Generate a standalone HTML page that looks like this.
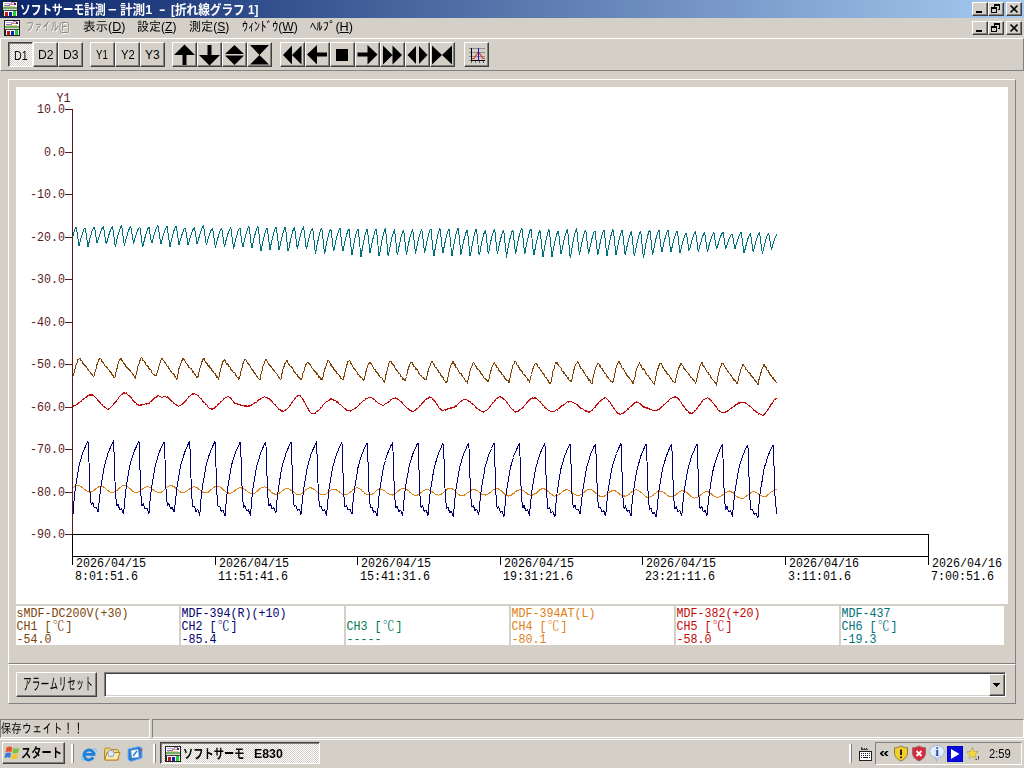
<!DOCTYPE html>
<html lang="ja"><head><meta charset="utf-8"><title>ソフトサーモ計測</title>
<style>
*{box-sizing:border-box;margin:0;padding:0}
html,body{width:1024px;height:768px;overflow:hidden;background:#d4d0c8}
body{position:relative;font-family:"Liberation Sans","IPAGothic","Noto Sans CJK JP",sans-serif;font-size:12px;color:#000;line-height:1}
.a{position:absolute}
.t{position:absolute;white-space:nowrap;transform-origin:0 0}
.title{left:0;top:0;width:1024px;height:18px;background:linear-gradient(to right,#0a246a,#a6caf0)}
.rb{border:1px solid;border-color:#fff #404040 #404040 #fff;box-shadow:inset -1px -1px 0 #808080,inset 1px 1px 0 #d4d0c8;background:#d4d0c8}
.sb{border:1px solid;border-color:#808080 #fff #fff #808080;box-shadow:inset 1px 1px 0 #404040,inset -1px -1px 0 #d4d0c8}
.r1{border:1px solid;border-color:#fff #808080 #808080 #fff}
.s1{border:1px solid;border-color:#808080 #fff #fff #808080}
.dith{background-color:#d4d0c8;background-image:linear-gradient(45deg,#fff 25%,transparent 25%,transparent 75%,#fff 75%),linear-gradient(45deg,#fff 25%,transparent 25%,transparent 75%,#fff 75%);background-size:2px 2px;background-position:0 0,1px 1px}
.pb{border:1px solid;border-color:#404040 #fff #fff #404040;box-shadow:inset 1px 1px 0 #808080}
.tb{width:25px;height:25px;top:42px}
.cap{width:16px;height:14px}
svg{position:absolute;left:0;top:0;overflow:visible}
</style></head>
<body>
<div class="a title"></div>
<svg class="a" style="left:2px;top:1px" width="16" height="16" viewBox="0 0 16 16" shape-rendering="crispEdges">
<rect x="0" y="0" width="16" height="16" fill="#222"/>
<rect x="1" y="1" width="14" height="6" fill="#fff"/>
<rect x="2" y="2" width="8" height="1" fill="#b8a8e0"/><rect x="9" y="1" width="4" height="1" fill="#9a80d0"/><rect x="12" y="2" width="2" height="2" fill="#502060"/>
<rect x="2" y="4" width="6" height="1" fill="#8070c8"/><rect x="7" y="3" width="5" height="1" fill="#e08080"/>
<rect x="2" y="5" width="11" height="1" fill="#d8c890"/>
<rect x="1" y="6" width="14" height="2" fill="#70b060"/>
<rect x="1" y="8" width="14" height="1" fill="#d8d8d8"/>
<rect x="1" y="9" width="14" height="1" fill="#444"/>
<rect x="2" y="10" width="13" height="5" fill="#fff"/>
<rect x="3" y="11" width="3" height="4" fill="#c01818"/>
<rect x="7" y="11" width="3" height="4" fill="#1020b0"/>
<rect x="11" y="10" width="3" height="5" fill="#20d030"/>
</svg>
<div class="t" id="t1" style="left:20.18px;top:3px;font-size:13px;font-weight:bold;font-family:'Liberation Sans','Noto Sans CJK JP',sans-serif;color:#fff;transform:scaleX(0.8235)">ソフトサーモ計測</div>
<div class="t" id="t2" style="left:108.00px;top:3px;font-size:13px;font-weight:bold;font-family:'Liberation Sans','Noto Sans CJK JP',sans-serif;color:#fff;transform:scaleX(1.1429)">−</div>
<div class="t" id="t3" style="left:120.00px;top:3px;font-size:13px;font-weight:bold;font-family:'Liberation Sans','Noto Sans CJK JP',sans-serif;color:#fff;transform:scaleX(0.9697)">計測1</div>
<div class="t" id="t4" style="left:159.00px;top:3px;font-size:13px;font-weight:bold;font-family:'Liberation Sans','Noto Sans CJK JP',sans-serif;color:#fff;transform:scaleX(1.5000)">-</div>
<div class="t" id="t5" style="left:171.10px;top:3px;font-size:13px;font-weight:bold;font-family:'Liberation Sans','Noto Sans CJK JP',sans-serif;color:#fff;transform:scaleX(0.8958)">[折れ線グラフ 1]</div>
<div class="a rb cap" style="left:972px;top:2px"><div class="a" style="left:3px;top:8px;width:6px;height:2px;background:#000"></div></div><div class="a rb cap" style="left:988px;top:2px"><svg width="14" height="12" viewBox="0 0 14 12" shape-rendering="crispEdges" style="left:0;top:0"><path d="M5 1h6v2h-6zM5 3h1v1h-1zM10 3h1v4h-1zM9 6h1v1h-1z" fill="#000"/><path d="M2 4h6v2h-6zM2 6h1v4h-1zM7 6h1v4h-1zM2 9h6v1h-6z" fill="#000"/></svg></div><div class="a rb cap" style="left:1006px;top:2px"><svg width="14" height="12" viewBox="0 0 14 12" style="left:0;top:0"><path d="M3.5 2.5l7 7M10.5 2.5l-7 7" stroke="#000" stroke-width="1.6" fill="none"/></svg></div>
<svg class="a" style="left:4px;top:20px" width="16" height="16" viewBox="0 0 16 16" shape-rendering="crispEdges">
<rect x="0" y="0" width="16" height="16" fill="#222"/>
<rect x="1" y="1" width="14" height="6" fill="#fff"/>
<rect x="2" y="2" width="8" height="1" fill="#b8a8e0"/><rect x="9" y="1" width="4" height="1" fill="#9a80d0"/><rect x="12" y="2" width="2" height="2" fill="#502060"/>
<rect x="2" y="4" width="6" height="1" fill="#8070c8"/><rect x="7" y="3" width="5" height="1" fill="#e08080"/>
<rect x="2" y="5" width="11" height="1" fill="#d8c890"/>
<rect x="1" y="6" width="14" height="2" fill="#70b060"/>
<rect x="1" y="8" width="14" height="1" fill="#d8d8d8"/>
<rect x="1" y="9" width="14" height="1" fill="#444"/>
<rect x="2" y="10" width="13" height="5" fill="#fff"/>
<rect x="3" y="11" width="3" height="4" fill="#c01818"/>
<rect x="7" y="11" width="3" height="4" fill="#1020b0"/>
<rect x="11" y="10" width="3" height="5" fill="#20d030"/>
</svg>
<div class="a rb cap" style="left:972px;top:21px"><div class="a" style="left:3px;top:8px;width:6px;height:2px;background:#000"></div></div><div class="a rb cap" style="left:988px;top:21px"><svg width="14" height="12" viewBox="0 0 14 12" shape-rendering="crispEdges" style="left:0;top:0"><path d="M5 1h6v2h-6zM5 3h1v1h-1zM10 3h1v4h-1zM9 6h1v1h-1z" fill="#000"/><path d="M2 4h6v2h-6zM2 6h1v4h-1zM7 6h1v4h-1zM2 9h6v1h-6z" fill="#000"/></svg></div><div class="a rb cap" style="left:1006px;top:21px"><svg width="14" height="12" viewBox="0 0 14 12" style="left:0;top:0"><path d="M3.5 2.5l7 7M10.5 2.5l-7 7" stroke="#000" stroke-width="1.6" fill="none"/></svg></div>
<div class="t" id="m0" style="left:25.73px;top:20px;font-size:13px;color:#808080;text-shadow:1px 1px 0 #fff;transform:scaleX(0.6364)">ファイル(<u>F</u>)</div>
<div class="t" id="m1" style="left:82.54px;top:20px;font-size:13px;color:#000;transform:scaleX(0.9643)">表示(<u>D</u>)</div>
<div class="t" id="m2" style="left:137.07px;top:20px;font-size:13px;color:#000;transform:scaleX(0.9268)">設定(<u>Z</u>)</div>
<div class="t" id="m3" style="left:189.07px;top:20px;font-size:13px;color:#000;transform:scaleX(0.9286)">測定(<u>S</u>)</div>
<div class="t" id="m4" style="left:242.07px;top:20px;font-size:13px;color:#000;transform:scaleX(0.9310)">ｳｨﾝﾄﾞｳ(<u>W</u>)</div>
<div class="t" id="m5" style="left:310.02px;top:20px;font-size:13px;color:#000;transform:scaleX(0.9762)">ﾍﾙﾌﾟ(<u>H</u>)</div>
<div class="a r1" style="left:0;top:38px;width:1024px;height:33px"></div>
<div class="a pb dith tb" style="left:8px"></div>
<div class="a rb tb" style="left:33px"></div>
<div class="a rb tb" style="left:58px"></div>
<div class="a rb tb" style="left:90px"></div>
<div class="a rb tb" style="left:115px"></div>
<div class="a rb tb" style="left:140px"></div>
<div class="t" id="d1" style="left:14.11px;top:50px;font-size:12px;color:#000;transform:scaleX(0.8929)">D1</div>
<div class="t" id="d2" style="left:37.99px;top:49px;font-size:12px;color:#000;transform:scaleX(1.0143)">D2</div>
<div class="t" id="d3" style="left:62.99px;top:49px;font-size:12px;color:#000;transform:scaleX(1.0143)">D3</div>
<div class="t" id="y1" style="left:96.00px;top:49px;font-size:12px;color:#000;transform:scaleX(0.8071)">Y1</div>
<div class="t" id="y2" style="left:120.70px;top:49px;font-size:12px;color:#000;transform:scaleX(0.9429)">Y2</div>
<div class="t" id="y3" style="left:145.00px;top:49px;font-size:12px;color:#000;transform:scaleX(1.0000)">Y3</div>
<div class="a rb tb" style="left:172px"><svg width="25" height="25" viewBox="0 0 25 25" style="left:-1px;top:-1px"><path d="M12.5 2.5L23 13H14.5V23H10.5V13H2Z" fill="#000"/></svg></div>
<div class="a rb tb" style="left:197px"><svg width="25" height="25" viewBox="0 0 25 25" style="left:-1px;top:-1px"><path d="M12.5 23.5L23 13H14.5V3H10.5V13H2Z" fill="#000"/></svg></div>
<div class="a rb tb" style="left:222px"><svg width="25" height="25" viewBox="0 0 25 25" style="left:-1px;top:-1px"><path d="M12.5 3L22 12H3ZM12.5 23L22 13.5H3Z" fill="#000"/></svg></div>
<div class="a rb tb" style="left:247px"><svg width="25" height="25" viewBox="0 0 25 25" style="left:-1px;top:-1px"><path d="M3 3H22L12.5 13ZM3 22.5H22L12.5 13Z" fill="#000"/></svg></div>
<div class="a rb tb" style="left:280px"><svg width="25" height="25" viewBox="0 0 25 25" style="left:-1px;top:-1px"><path d="M3 13L12 3.5V22.5ZM12 13L21.5 3.5V22.5Z" fill="#000"/></svg></div>
<div class="a rb tb" style="left:305px"><svg width="25" height="25" viewBox="0 0 25 25" style="left:-1px;top:-1px"><path d="M2 12.5L12 3V10.5H22V14.5H12V22.5Z" fill="#000"/></svg></div>
<div class="a rb tb" style="left:330px"><svg width="25" height="25" viewBox="0 0 25 25" style="left:-1px;top:-1px"><path d="M6 7H18V19H6Z" fill="#000"/></svg></div>
<div class="a rb tb" style="left:355px"><svg width="25" height="25" viewBox="0 0 25 25" style="left:-1px;top:-1px"><path d="M22.5 12.5L12.5 3V10.5H2.5V14.5H12.5V22.5Z" fill="#000"/></svg></div>
<div class="a rb tb" style="left:380px"><svg width="25" height="25" viewBox="0 0 25 25" style="left:-1px;top:-1px"><path d="M3 3.5L12.5 13L3 22.5ZM12.5 3.5L22 13L12.5 22.5Z" fill="#000"/></svg></div>
<div class="a rb tb" style="left:405px"><svg width="25" height="25" viewBox="0 0 25 25" style="left:-1px;top:-1px"><path d="M2.5 13L11 4V22ZM22.5 13L14 4V22Z" fill="#000"/></svg></div>
<div class="a rb tb" style="left:430px"><svg width="25" height="25" viewBox="0 0 25 25" style="left:-1px;top:-1px"><path d="M2 3.5L12 13L2 22.5ZM22 3.5L12 13L22 22.5Z" fill="#000"/></svg></div>
<div class="a rb tb" style="left:464px"><svg width="25" height="25" viewBox="0 0 25 25" style="left:-1px;top:-1px" shape-rendering="crispEdges">
<path d="M5 6.5h16M5 10.5h16M5 14.5h16M5 18.5h3" stroke="#909090" stroke-width="1" fill="none"/>
<path d="M7.5 6v13M7 18.5h14" stroke="#000" stroke-width="1" fill="none"/>
<path d="M7.5 19v2M11.5 19v2M15.5 19v2M19.5 19v2" stroke="#606060" stroke-width="1" fill="none"/>
<path d="M8 16.5h2l4 -6l1 0l4 6h2" stroke="#e03030" stroke-width="1.2" fill="none" shape-rendering="auto"/>
<path d="M14.5 6v13" stroke="#1818a0" stroke-width="1" fill="none"/>
</svg></div>
<div class="a r1" style="left:8px;top:79px;width:1008px;height:585px"></div>
<div class="a" style="left:16px;top:87px;width:992px;height:517px;background:#fff"></div>
<div class="a" style="left:16px;top:606px;width:163px;height:39px;background:#fff"></div>
<div class="a" style="left:181px;top:606px;width:163px;height:39px;background:#fff"></div>
<div class="a" style="left:346px;top:606px;width:163px;height:39px;background:#fff"></div>
<div class="a" style="left:511px;top:606px;width:163px;height:39px;background:#fff"></div>
<div class="a" style="left:676px;top:606px;width:163px;height:39px;background:#fff"></div>
<div class="a" style="left:841px;top:606px;width:163px;height:39px;background:#fff"></div>
<svg width="1024" height="768" viewBox="0 0 1024 768">
<g shape-rendering="crispEdges" fill="none">
<path d="M72.5 109V534" stroke="#5a1a1c"/>
<path d="M65 109.5H73" stroke="#5a1a1c"/>
<path d="M65 152.5H73" stroke="#5a1a1c"/>
<path d="M65 194.5H73" stroke="#5a1a1c"/>
<path d="M65 237.5H73" stroke="#5a1a1c"/>
<path d="M65 279.5H73" stroke="#5a1a1c"/>
<path d="M65 322.5H73" stroke="#5a1a1c"/>
<path d="M65 364.5H73" stroke="#5a1a1c"/>
<path d="M65 407.5H73" stroke="#5a1a1c"/>
<path d="M65 449.5H73" stroke="#5a1a1c"/>
<path d="M65 492.5H73" stroke="#5a1a1c"/>
<path d="M65 534.5H73" stroke="#5a1a1c"/>
<rect x="72.5" y="534.5" width="856" height="22" stroke="#000"/>
<path d="M72.5 557V565" stroke="#000"/>
<path d="M215.5 557V565" stroke="#000"/>
<path d="M357.5 557V565" stroke="#000"/>
<path d="M500.5 557V565" stroke="#000"/>
<path d="M642.5 557V565" stroke="#000"/>
<path d="M785.5 557V565" stroke="#000"/>
<path d="M928.5 557V565" stroke="#000"/>
</g>
<text x="40.5 47.5 54.5 61.5" y="113.5" fill="#5a1a1c" font-family='"Liberation Mono","Noto Serif CJK SC",monospace' font-size="11.67" text-anchor="middle" transform="matrix(1 0 0 1.08 0 -9.08)" >10.0</text>
<text x="47.5 54.5 61.5" y="156.5" fill="#5a1a1c" font-family='"Liberation Mono","Noto Serif CJK SC",monospace' font-size="11.67" text-anchor="middle" transform="matrix(1 0 0 1.08 0 -12.52)" >0.0</text>
<text x="33.5 40.5 47.5 54.5 61.5" y="198.5" fill="#5a1a1c" font-family='"Liberation Mono","Noto Serif CJK SC",monospace' font-size="11.67" text-anchor="middle" transform="matrix(1 0 0 1.08 0 -15.88)" >-10.0</text>
<text x="33.5 40.5 47.5 54.5 61.5" y="241.5" fill="#5a1a1c" font-family='"Liberation Mono","Noto Serif CJK SC",monospace' font-size="11.67" text-anchor="middle" transform="matrix(1 0 0 1.08 0 -19.32)" >-20.0</text>
<text x="33.5 40.5 47.5 54.5 61.5" y="283.5" fill="#5a1a1c" font-family='"Liberation Mono","Noto Serif CJK SC",monospace' font-size="11.67" text-anchor="middle" transform="matrix(1 0 0 1.08 0 -22.68)" >-30.0</text>
<text x="33.5 40.5 47.5 54.5 61.5" y="326.5" fill="#5a1a1c" font-family='"Liberation Mono","Noto Serif CJK SC",monospace' font-size="11.67" text-anchor="middle" transform="matrix(1 0 0 1.08 0 -26.12)" >-40.0</text>
<text x="33.5 40.5 47.5 54.5 61.5" y="368.5" fill="#5a1a1c" font-family='"Liberation Mono","Noto Serif CJK SC",monospace' font-size="11.67" text-anchor="middle" transform="matrix(1 0 0 1.08 0 -29.48)" >-50.0</text>
<text x="33.5 40.5 47.5 54.5 61.5" y="411.5" fill="#5a1a1c" font-family='"Liberation Mono","Noto Serif CJK SC",monospace' font-size="11.67" text-anchor="middle" transform="matrix(1 0 0 1.08 0 -32.92)" >-60.0</text>
<text x="33.5 40.5 47.5 54.5 61.5" y="453.5" fill="#5a1a1c" font-family='"Liberation Mono","Noto Serif CJK SC",monospace' font-size="11.67" text-anchor="middle" transform="matrix(1 0 0 1.08 0 -36.28)" >-70.0</text>
<text x="33.5 40.5 47.5 54.5 61.5" y="496.5" fill="#5a1a1c" font-family='"Liberation Mono","Noto Serif CJK SC",monospace' font-size="11.67" text-anchor="middle" transform="matrix(1 0 0 1.08 0 -39.72)" >-80.0</text>
<text x="33.5 40.5 47.5 54.5 61.5" y="538.5" fill="#5a1a1c" font-family='"Liberation Mono","Noto Serif CJK SC",monospace' font-size="11.67" text-anchor="middle" transform="matrix(1 0 0 1.08 0 -43.08)" >-90.0</text>
<text x="60 67" y="102" fill="#5a1a1c" font-family='"Liberation Mono","Noto Serif CJK SC",monospace' font-size="11.67" text-anchor="middle" transform="matrix(1 0 0 1.08 0 -8.16)" >Y1</text>
<text x="79.5 86.5 93.5 100.5 107.5 114.5 121.5 128.5 135.5 142.5" y="567.5" fill="#000" font-family='"Liberation Mono","Noto Serif CJK SC",monospace' font-size="11.67" text-anchor="middle" transform="matrix(1 0 0 1.08 0 -45.4)" >2026/04/15</text>
<text x="78.5 85.5 92.5 99.5 106.5 113.5 120.5 127.5 134.5" y="580.5" fill="#000" font-family='"Liberation Mono","Noto Serif CJK SC",monospace' font-size="11.67" text-anchor="middle" transform="matrix(1 0 0 1.08 0 -46.44)" >8:01:51.6</text>
<text x="222.5 229.5 236.5 243.5 250.5 257.5 264.5 271.5 278.5 285.5" y="567.5" fill="#000" font-family='"Liberation Mono","Noto Serif CJK SC",monospace' font-size="11.67" text-anchor="middle" transform="matrix(1 0 0 1.08 0 -45.4)" >2026/04/15</text>
<text x="221.5 228.5 235.5 242.5 249.5 256.5 263.5 270.5 277.5 284.5" y="580.5" fill="#000" font-family='"Liberation Mono","Noto Serif CJK SC",monospace' font-size="11.67" text-anchor="middle" transform="matrix(1 0 0 1.08 0 -46.44)" >11:51:41.6</text>
<text x="364.5 371.5 378.5 385.5 392.5 399.5 406.5 413.5 420.5 427.5" y="567.5" fill="#000" font-family='"Liberation Mono","Noto Serif CJK SC",monospace' font-size="11.67" text-anchor="middle" transform="matrix(1 0 0 1.08 0 -45.4)" >2026/04/15</text>
<text x="363.5 370.5 377.5 384.5 391.5 398.5 405.5 412.5 419.5 426.5" y="580.5" fill="#000" font-family='"Liberation Mono","Noto Serif CJK SC",monospace' font-size="11.67" text-anchor="middle" transform="matrix(1 0 0 1.08 0 -46.44)" >15:41:31.6</text>
<text x="507.5 514.5 521.5 528.5 535.5 542.5 549.5 556.5 563.5 570.5" y="567.5" fill="#000" font-family='"Liberation Mono","Noto Serif CJK SC",monospace' font-size="11.67" text-anchor="middle" transform="matrix(1 0 0 1.08 0 -45.4)" >2026/04/15</text>
<text x="506.5 513.5 520.5 527.5 534.5 541.5 548.5 555.5 562.5 569.5" y="580.5" fill="#000" font-family='"Liberation Mono","Noto Serif CJK SC",monospace' font-size="11.67" text-anchor="middle" transform="matrix(1 0 0 1.08 0 -46.44)" >19:31:21.6</text>
<text x="649.5 656.5 663.5 670.5 677.5 684.5 691.5 698.5 705.5 712.5" y="567.5" fill="#000" font-family='"Liberation Mono","Noto Serif CJK SC",monospace' font-size="11.67" text-anchor="middle" transform="matrix(1 0 0 1.08 0 -45.4)" >2026/04/15</text>
<text x="648.5 655.5 662.5 669.5 676.5 683.5 690.5 697.5 704.5 711.5" y="580.5" fill="#000" font-family='"Liberation Mono","Noto Serif CJK SC",monospace' font-size="11.67" text-anchor="middle" transform="matrix(1 0 0 1.08 0 -46.44)" >23:21:11.6</text>
<text x="792.5 799.5 806.5 813.5 820.5 827.5 834.5 841.5 848.5 855.5" y="567.5" fill="#000" font-family='"Liberation Mono","Noto Serif CJK SC",monospace' font-size="11.67" text-anchor="middle" transform="matrix(1 0 0 1.08 0 -45.4)" >2026/04/16</text>
<text x="791.5 798.5 805.5 812.5 819.5 826.5 833.5 840.5 847.5" y="580.5" fill="#000" font-family='"Liberation Mono","Noto Serif CJK SC",monospace' font-size="11.67" text-anchor="middle" transform="matrix(1 0 0 1.08 0 -46.44)" >3:11:01.6</text>
<text x="935.5 942.5 949.5 956.5 963.5 970.5 977.5 984.5 991.5 998.5" y="567.5" fill="#000" font-family='"Liberation Mono","Noto Serif CJK SC",monospace' font-size="11.67" text-anchor="middle" transform="matrix(1 0 0 1.08 0 -45.4)" >2026/04/16</text>
<text x="934.5 941.5 948.5 955.5 962.5 969.5 976.5 983.5 990.5" y="580.5" fill="#000" font-family='"Liberation Mono","Noto Serif CJK SC",monospace' font-size="11.67" text-anchor="middle" transform="matrix(1 0 0 1.08 0 -46.44)" >7:00:51.6</text>
<text x="20 27 34 41 48 55 62 69 76 83 90 97 104 111 118 125" y="617" fill="#7c4208" font-family='"Liberation Mono","Noto Serif CJK SC",monospace' font-size="11.67" text-anchor="middle" transform="matrix(1 0 0 1.08 0 -49.36)" >sMDF-DC200V(+30)</text>
<text x="20 27 34 41 48 58.5 69" y="630.5" fill="#7c4208" font-family='"Liberation Mono","Noto Serif CJK SC",monospace' font-size="11.67" text-anchor="middle" transform="matrix(1 0 0 1.08 0 -50.44)" >CH1 [℃]</text>
<text x="20 27 34 41 48" y="643.5" fill="#7c4208" font-family='"Liberation Mono","Noto Serif CJK SC",monospace' font-size="11.67" text-anchor="middle" transform="matrix(1 0 0 1.08 0 -51.48)" >-54.0</text>
<text x="185 192 199 206 213 220 227 234 241 248 255 262 269 276 283" y="617" fill="#000070" font-family='"Liberation Mono","Noto Serif CJK SC",monospace' font-size="11.67" text-anchor="middle" transform="matrix(1 0 0 1.08 0 -49.36)" >MDF-394(R)(+10)</text>
<text x="185 192 199 206 213 223.5 234" y="630.5" fill="#000070" font-family='"Liberation Mono","Noto Serif CJK SC",monospace' font-size="11.67" text-anchor="middle" transform="matrix(1 0 0 1.08 0 -50.44)" >CH2 [℃]</text>
<text x="185 192 199 206 213" y="643.5" fill="#000070" font-family='"Liberation Mono","Noto Serif CJK SC",monospace' font-size="11.67" text-anchor="middle" transform="matrix(1 0 0 1.08 0 -51.48)" >-85.4</text>
<text x="350 357 364 371 378 388.5 399" y="630.5" fill="#007850" font-family='"Liberation Mono","Noto Serif CJK SC",monospace' font-size="11.67" text-anchor="middle" transform="matrix(1 0 0 1.08 0 -50.44)" >CH3 [℃]</text>
<text x="350 357 364 371 378" y="643.5" fill="#007850" font-family='"Liberation Mono","Noto Serif CJK SC",monospace' font-size="11.67" text-anchor="middle" transform="matrix(1 0 0 1.08 0 -51.48)" >-----</text>
<text x="515 522 529 536 543 550 557 564 571 578 585 592" y="617" fill="#e08018" font-family='"Liberation Mono","Noto Serif CJK SC",monospace' font-size="11.67" text-anchor="middle" transform="matrix(1 0 0 1.08 0 -49.36)" >MDF-394AT(L)</text>
<text x="515 522 529 536 543 553.5 564" y="630.5" fill="#e08018" font-family='"Liberation Mono","Noto Serif CJK SC",monospace' font-size="11.67" text-anchor="middle" transform="matrix(1 0 0 1.08 0 -50.44)" >CH4 [℃]</text>
<text x="515 522 529 536 543" y="643.5" fill="#e08018" font-family='"Liberation Mono","Noto Serif CJK SC",monospace' font-size="11.67" text-anchor="middle" transform="matrix(1 0 0 1.08 0 -51.48)" >-80.1</text>
<text x="680 687 694 701 708 715 722 729 736 743 750 757" y="617" fill="#c00808" font-family='"Liberation Mono","Noto Serif CJK SC",monospace' font-size="11.67" text-anchor="middle" transform="matrix(1 0 0 1.08 0 -49.36)" >MDF-382(+20)</text>
<text x="680 687 694 701 708 718.5 729" y="630.5" fill="#c00808" font-family='"Liberation Mono","Noto Serif CJK SC",monospace' font-size="11.67" text-anchor="middle" transform="matrix(1 0 0 1.08 0 -50.44)" >CH5 [℃]</text>
<text x="680 687 694 701 708" y="643.5" fill="#c00808" font-family='"Liberation Mono","Noto Serif CJK SC",monospace' font-size="11.67" text-anchor="middle" transform="matrix(1 0 0 1.08 0 -51.48)" >-58.0</text>
<text x="845 852 859 866 873 880 887" y="617" fill="#00707a" font-family='"Liberation Mono","Noto Serif CJK SC",monospace' font-size="11.67" text-anchor="middle" transform="matrix(1 0 0 1.08 0 -49.36)" >MDF-437</text>
<text x="845 852 859 866 873 883.5 894" y="630.5" fill="#00707a" font-family='"Liberation Mono","Noto Serif CJK SC",monospace' font-size="11.67" text-anchor="middle" transform="matrix(1 0 0 1.08 0 -50.44)" >CH6 [℃]</text>
<text x="845 852 859 866 873" y="643.5" fill="#00707a" font-family='"Liberation Mono","Noto Serif CJK SC",monospace' font-size="11.67" text-anchor="middle" transform="matrix(1 0 0 1.08 0 -51.48)" >-19.3</text>
<polyline points="72.5,488.1 73.0,488.1 73.5,487.2 74.0,487.0 74.5,486.3 75.0,486.4 75.5,486.1 76.0,485.5 76.5,485.6 77.0,485.5 77.5,485.1 78.0,485.2 78.5,485.3 79.0,485.7 79.5,485.4 80.0,485.9 80.5,486.1 81.0,486.4 81.5,486.8 82.0,487.4 82.5,487.4 83.0,488.2 83.5,488.4 84.0,489.1 84.5,489.6 85.0,489.6 85.5,490.4 86.0,490.9 86.5,490.8 87.0,491.0 87.5,491.3 88.0,492.0 88.5,491.6 89.0,492.3 89.5,491.9 90.0,492.2 90.5,491.8 91.0,491.7 91.5,491.9 92.0,491.3 92.5,491.2 93.0,491.2 93.5,490.8 94.0,490.5 94.5,490.2 95.0,489.3 95.5,489.0 96.0,488.9 96.5,488.5 97.0,487.7 97.5,487.7 98.0,487.2 98.5,487.1 99.0,486.6 99.5,486.4 100.0,486.9 100.5,486.4 101.0,486.7 101.5,486.3 102.0,486.6 102.5,486.5 103.0,486.9 103.5,487.0 104.0,487.6 104.5,487.6 105.0,488.3 105.5,488.6 106.0,488.7 106.5,489.3 107.0,489.8 107.5,490.4 108.0,490.5 108.5,490.8 109.0,491.6 109.5,491.9 110.0,492.0 110.5,492.0 111.0,492.1 111.5,492.3 112.0,492.3 112.5,492.3 113.0,492.5 113.5,492.3 114.0,492.2 114.5,491.9 115.0,491.4 115.5,491.5 116.0,491.1 116.5,490.7 117.0,490.3 117.5,489.9 118.0,489.6 118.5,489.1 119.0,488.5 119.5,487.9 120.0,487.4 120.5,487.1 121.0,487.0 121.5,486.3 122.0,486.0 122.5,485.8 123.0,485.4 123.5,485.8 124.0,485.1 124.5,485.5 125.0,485.7 125.5,485.4 126.0,485.8 126.5,485.9 127.0,486.1 127.5,486.4 128.0,486.7 128.5,487.5 129.0,487.9 129.5,488.4 130.0,488.3 130.5,489.2 131.0,489.4 131.5,490.0 132.0,490.4 132.5,490.6 133.0,491.4 133.5,491.1 134.0,491.9 134.5,492.2 135.0,492.1 135.5,492.3 136.0,492.6 136.5,492.2 137.0,492.4 137.5,492.3 138.0,491.9 138.5,491.9 139.0,491.5 139.5,491.3 140.0,491.0 140.5,490.7 141.0,490.1 141.5,489.9 142.0,489.4 142.5,488.9 143.0,488.7 143.5,488.1 144.0,488.2 144.5,487.6 145.0,487.5 145.5,487.1 146.0,486.9 146.5,486.6 147.0,486.5 147.5,486.9 148.0,486.7 148.5,486.8 149.0,486.9 149.5,487.3 150.0,487.2 150.5,487.4 151.0,488.1 151.5,488.3 152.0,488.8 152.5,489.3 153.0,489.7 153.5,490.1 154.0,490.0 154.5,490.6 155.0,491.3 155.5,491.6 156.0,491.5 156.5,491.8 157.0,492.1 157.5,492.2 158.0,492.5 158.5,492.8 159.0,492.7 159.5,492.6 160.0,492.3 160.5,492.3 161.0,492.4 161.5,492.0 162.0,491.5 162.5,491.2 163.0,491.0 163.5,490.6 164.0,489.8 164.5,489.6 165.0,489.0 165.5,488.6 166.0,488.0 166.5,487.6 167.0,487.2 167.5,486.8 168.0,486.3 168.5,486.1 169.0,486.1 169.5,485.6 170.0,485.5 170.5,485.7 171.0,485.5 171.5,485.5 172.0,485.6 172.5,486.1 173.0,485.9 173.5,486.5 174.0,486.9 174.5,486.9 175.0,487.4 175.5,488.0 176.0,488.4 176.5,488.7 177.0,488.9 177.5,489.6 178.0,490.0 178.5,490.7 179.0,490.8 179.5,491.3 180.0,491.7 180.5,492.1 181.0,492.1 181.5,492.3 182.0,492.5 182.5,492.8 183.0,492.4 183.5,492.8 184.0,492.6 184.5,492.2 185.0,492.2 185.5,491.7 186.0,491.3 186.5,491.4 187.0,490.8 187.5,490.5 188.0,490.1 188.5,489.9 189.0,489.4 189.5,488.6 190.0,488.6 190.5,488.2 191.0,487.8 191.5,487.8 192.0,487.3 192.5,487.1 193.0,487.2 193.5,486.9 194.0,486.9 194.5,486.9 195.0,487.2 195.5,487.2 196.0,487.4 196.5,487.4 197.0,487.5 197.5,488.2 198.0,488.5 198.5,488.9 199.0,489.3 199.5,489.4 200.0,489.8 200.5,490.1 201.0,491.0 201.5,490.9 202.0,491.3 202.5,492.0 203.0,492.2 203.5,492.1 204.0,492.7 204.5,492.9 205.0,492.8 205.5,492.6 206.0,493.0 206.5,492.7 207.0,492.7 207.5,492.7 208.0,492.4 208.5,492.1 209.0,491.3 209.5,491.1 210.0,490.8 210.5,490.0 211.0,490.2 211.5,489.3 212.0,488.8 212.5,488.4 213.0,488.0 213.5,487.9 214.0,487.4 214.5,487.0 215.0,486.7 215.5,486.2 216.0,486.2 216.5,486.4 217.0,486.2 217.5,486.3 218.0,486.0 218.5,486.0 219.0,486.1 219.5,486.6 220.0,486.8 220.5,487.2 221.0,487.5 221.5,488.0 222.0,488.3 222.5,489.0 223.0,489.1 223.5,490.0 224.0,490.3 224.5,490.4 225.0,491.0 225.5,491.6 226.0,491.9 226.5,492.3 227.0,492.5 227.5,492.7 228.0,493.2 228.5,493.0 229.0,493.4 229.5,493.5 230.0,493.3 230.5,493.1 231.0,493.3 231.5,492.8 232.0,492.8 232.5,492.1 233.0,492.0 233.5,491.8 234.0,491.0 234.5,491.1 235.0,490.3 235.5,490.2 236.0,489.6 236.5,489.6 237.0,489.1 237.5,488.9 238.0,488.4 238.5,488.3 239.0,488.1 239.5,487.7 240.0,487.6 240.5,487.9 241.0,487.5 241.5,488.1 242.0,487.7 242.5,487.9 243.0,488.1 243.5,488.8 244.0,489.2 244.5,489.2 245.0,489.7 245.5,489.9 246.0,490.7 246.5,490.9 247.0,491.0 247.5,491.4 248.0,492.1 248.5,492.1 249.0,492.9 249.5,492.9 250.0,493.1 250.5,493.5 251.0,493.5 251.5,493.7 252.0,493.5 252.5,494.0 253.0,493.5 253.5,493.7 254.0,493.1 254.5,493.3 255.0,493.1 255.5,492.4 256.0,491.8 256.5,491.6 257.0,491.4 257.5,490.7 258.0,490.4 258.5,489.7 259.0,489.5 259.5,489.2 260.0,488.6 260.5,488.4 261.0,487.7 261.5,487.9 262.0,487.2 262.5,487.5 263.0,487.4 263.5,487.3 264.0,487.0 264.5,486.9 265.0,487.0 265.5,487.4 266.0,487.5 266.5,488.0 267.0,487.9 267.5,488.5 268.0,489.1 268.5,489.3 269.0,489.8 269.5,490.0 270.0,490.5 270.5,491.0 271.0,491.8 271.5,492.3 272.0,492.3 272.5,493.1 273.0,492.9 273.5,493.6 274.0,494.1 274.5,493.9 275.0,494.4 275.5,494.3 276.0,494.0 276.5,494.1 277.0,494.1 277.5,493.9 278.0,494.0 278.5,493.4 279.0,493.5 279.5,492.9 280.0,492.4 280.5,492.4 281.0,491.7 281.5,491.6 282.0,491.3 282.5,490.8 283.0,490.4 283.5,489.8 284.0,489.7 284.5,489.2 285.0,489.3 285.5,488.7 286.0,488.9 286.5,488.6 287.0,488.6 287.5,488.8 288.0,488.5 288.5,488.6 289.0,489.3 289.5,489.1 290.0,489.7 290.5,490.0 291.0,490.1 291.5,490.3 292.0,490.6 292.5,491.5 293.0,491.4 293.5,492.1 294.0,492.5 294.5,492.6 295.0,493.2 295.5,493.4 296.0,493.9 296.5,494.1 297.0,494.2 297.5,494.3 298.0,494.5 298.5,494.4 299.0,494.4 299.5,494.4 300.0,494.6 300.5,494.2 301.0,494.2 301.5,493.4 302.0,493.6 302.5,493.0 303.0,492.8 303.5,492.2 304.0,491.8 304.5,491.1 305.0,491.0 305.5,490.1 306.0,489.8 306.5,489.2 307.0,489.1 307.5,488.8 308.0,488.4 308.5,488.5 309.0,487.8 309.5,487.9 310.0,487.6 310.5,487.8 311.0,488.0 311.5,488.0 312.0,487.8 312.5,488.1 313.0,488.6 313.5,489.1 314.0,488.9 314.5,489.6 315.0,490.1 315.5,490.6 316.0,490.8 316.5,491.5 317.0,491.8 317.5,492.5 318.0,492.4 318.5,493.4 319.0,493.4 319.5,493.8 320.0,493.9 320.5,494.3 321.0,494.8 321.5,494.9 322.0,494.7 322.5,494.8 323.0,494.7 323.5,494.6 324.0,494.5 324.5,494.4 325.0,494.5 325.5,494.3 326.0,493.8 326.5,493.3 327.0,492.9 327.5,492.7 328.0,492.4 328.5,491.9 329.0,491.4 329.5,490.7 330.0,490.6 330.5,490.4 331.0,490.1 331.5,489.4 332.0,489.5 332.5,489.1 333.0,488.9 333.5,489.3 334.0,489.1 334.5,489.2 335.0,489.0 335.5,489.5 336.0,489.8 336.5,490.0 337.0,490.2 337.5,490.6 338.0,490.9 338.5,491.1 339.0,491.4 339.5,492.1 340.0,492.5 340.5,492.9 341.0,492.9 341.5,493.7 342.0,493.8 342.5,494.3 343.0,494.0 343.5,494.8 344.0,494.8 344.5,494.6 345.0,495.0 345.5,494.6 346.0,494.5 346.5,494.5 347.0,494.2 347.5,494.1 348.0,494.1 348.5,493.7 349.0,493.3 349.5,492.7 350.0,492.5 350.5,492.1 351.0,491.6 351.5,491.3 352.0,490.8 352.5,490.1 353.0,489.5 353.5,489.4 354.0,489.2 354.5,488.6 355.0,488.5 355.5,488.4 356.0,488.3 356.5,487.7 357.0,487.9 357.5,487.7 358.0,487.8 358.5,488.4 359.0,488.4 359.5,488.7 360.0,489.0 360.5,489.2 361.0,489.6 361.5,490.1 362.0,490.8 362.5,491.1 363.0,491.4 363.5,491.7 364.0,492.3 364.5,493.0 365.0,493.3 365.5,493.8 366.0,494.2 366.5,494.1 367.0,494.7 367.5,494.6 368.0,495.2 368.5,494.9 369.0,495.0 369.5,495.4 370.0,495.0 370.5,494.8 371.0,495.0 371.5,494.6 372.0,494.5 372.5,493.8 373.0,493.6 373.5,493.5 374.0,492.8 374.5,492.7 375.0,491.8 375.5,491.8 376.0,491.0 376.5,490.8 377.0,490.2 377.5,489.9 378.0,490.1 378.5,489.6 379.0,489.6 379.5,489.2 380.0,489.1 380.5,489.0 381.0,489.3 381.5,489.5 382.0,489.5 382.5,489.6 383.0,490.1 383.5,490.4 384.0,490.6 384.5,490.6 385.0,491.3 385.5,491.6 386.0,492.3 386.5,492.3 387.0,492.9 387.5,493.2 388.0,493.4 388.5,493.8 389.0,494.2 389.5,494.6 390.0,494.6 390.5,494.7 391.0,495.1 391.5,494.7 392.0,495.1 392.5,495.0 393.0,494.8 393.5,494.5 394.0,494.5 394.5,494.3 395.0,493.9 395.5,493.5 396.0,492.7 396.5,492.5 397.0,491.9 397.5,492.0 398.0,491.5 398.5,490.6 399.0,490.4 399.5,490.0 400.0,489.3 400.5,489.2 401.0,489.1 401.5,488.7 402.0,488.3 402.5,488.5 403.0,488.1 403.5,488.2 404.0,488.1 404.5,488.6 405.0,488.5 405.5,488.8 406.0,489.0 406.5,489.1 407.0,489.8 407.5,490.0 408.0,490.4 408.5,490.6 409.0,491.0 409.5,491.7 410.0,492.4 410.5,492.8 411.0,493.0 411.5,493.3 412.0,493.9 412.5,494.5 413.0,494.4 413.5,495.0 414.0,494.9 414.5,495.1 415.0,495.1 415.5,495.3 416.0,495.3 416.5,495.6 417.0,495.5 417.5,494.8 418.0,494.7 418.5,494.8 419.0,494.0 419.5,493.7 420.0,493.4 420.5,492.8 421.0,492.5 421.5,492.2 422.0,491.8 422.5,491.7 423.0,490.9 423.5,490.5 424.0,490.6 424.5,490.1 425.0,490.1 425.5,489.7 426.0,489.7 426.5,489.3 427.0,489.2 427.5,489.6 428.0,489.5 428.5,489.6 429.0,489.9 429.5,490.2 430.0,490.1 430.5,490.5 431.0,491.2 431.5,491.3 432.0,491.5 432.5,492.1 433.0,492.3 433.5,493.0 434.0,493.0 434.5,493.8 435.0,494.0 435.5,494.1 436.0,494.7 436.5,494.6 437.0,494.7 437.5,494.7 438.0,495.1 438.5,495.2 439.0,495.1 439.5,494.8 440.0,494.9 440.5,494.3 441.0,494.1 441.5,494.0 442.0,493.8 442.5,493.3 443.0,492.9 443.5,492.5 444.0,491.8 444.5,491.7 445.0,491.2 445.5,490.5 446.0,490.1 446.5,490.0 447.0,489.3 447.5,488.9 448.0,489.1 448.5,488.7 449.0,488.5 449.5,488.5 450.0,488.6 450.5,488.2 451.0,488.4 451.5,488.3 452.0,488.7 452.5,489.1 453.0,489.6 453.5,489.8 454.0,490.1 454.5,490.4 455.0,491.0 455.5,491.3 456.0,492.1 456.5,492.5 457.0,493.0 457.5,493.0 458.0,493.8 458.5,494.2 459.0,494.5 459.5,495.0 460.0,495.3 460.5,495.4 461.0,495.6 461.5,495.6 462.0,495.8 462.5,495.4 463.0,495.7 463.5,495.5 464.0,495.3 464.5,494.9 465.0,494.5 465.5,494.5 466.0,494.3 466.5,493.6 467.0,493.1 467.5,492.7 468.0,492.2 468.5,492.2 469.0,491.9 469.5,491.5 470.0,490.8 470.5,490.7 471.0,490.0 471.5,490.2 472.0,489.7 472.5,489.4 473.0,489.7 473.5,489.3 474.0,489.4 474.5,489.3 475.0,489.7 475.5,489.9 476.0,490.3 476.5,490.1 477.0,490.9 477.5,490.8 478.0,491.2 478.5,491.8 479.0,492.0 479.5,492.4 480.0,493.0 480.5,493.1 481.0,493.8 481.5,493.8 482.0,494.5 482.5,494.8 483.0,494.8 483.5,494.7 484.0,495.2 484.5,494.9 485.0,495.2 485.5,495.1 486.0,494.7 486.5,494.9 487.0,494.8 487.5,494.4 488.0,494.0 488.5,493.7 489.0,493.4 489.5,492.8 490.0,492.8 490.5,492.4 491.0,491.8 491.5,491.5 492.0,490.7 492.5,490.7 493.0,489.7 493.5,489.6 494.0,489.1 494.5,489.0 495.0,489.0 495.5,488.8 496.0,488.6 496.5,488.5 497.0,488.4 497.5,488.6 498.0,488.6 498.5,488.8 499.0,489.4 499.5,489.5 500.0,489.8 500.5,490.1 501.0,490.8 501.5,490.9 502.0,491.4 502.5,492.1 503.0,492.6 503.5,493.3 504.0,493.6 504.5,494.1 505.0,494.5 505.5,494.8 506.0,495.1 506.5,495.0 507.0,495.3 507.5,495.4 508.0,496.0 508.5,496.0 509.0,495.9 509.5,495.6 510.0,495.6 510.5,495.3 511.0,495.3 511.5,495.3 512.0,494.5 512.5,494.0 513.0,493.7 513.5,493.5 514.0,493.4 514.5,492.9 515.0,492.3 515.5,491.6 516.0,491.3 516.5,490.9 517.0,490.9 517.5,490.5 518.0,490.5 518.5,490.2 519.0,490.0 519.5,489.7 520.0,489.9 520.5,489.4 521.0,489.5 521.5,489.9 522.0,490.0 522.5,490.0 523.0,490.3 523.5,490.5 524.0,491.3 524.5,491.6 525.0,492.1 525.5,492.5 526.0,492.6 526.5,493.1 527.0,493.3 527.5,493.9 528.0,494.3 528.5,494.2 529.0,494.4 529.5,494.7 530.0,495.1 530.5,495.1 531.0,495.0 531.5,495.5 532.0,495.4 532.5,495.1 533.0,494.7 533.5,495.0 534.0,494.6 534.5,494.0 535.0,493.8 535.5,493.6 536.0,493.4 536.5,492.7 537.0,492.4 537.5,491.7 538.0,491.3 538.5,491.2 539.0,490.5 539.5,490.0 540.0,489.9 540.5,489.3 541.0,489.1 541.5,489.0 542.0,488.9 542.5,488.9 543.0,488.9 543.5,488.7 544.0,488.6 544.5,489.1 545.0,488.9 545.5,489.4 546.0,489.6 546.5,490.1 547.0,490.5 547.5,490.7 548.0,491.4 548.5,491.8 549.0,492.2 549.5,492.5 550.0,493.4 550.5,493.7 551.0,493.8 551.5,494.3 552.0,495.1 552.5,495.0 553.0,495.4 553.5,495.8 554.0,496.0 554.5,496.1 555.0,496.2 555.5,495.8 556.0,495.7 556.5,496.2 557.0,495.9 557.5,495.2 558.0,494.9 558.5,494.7 559.0,494.8 559.5,494.0 560.0,493.9 560.5,493.6 561.0,493.0 561.5,492.8 562.0,492.0 562.5,491.5 563.0,491.1 563.5,491.2 564.0,490.5 564.5,490.7 565.0,490.3 565.5,489.9 566.0,490.1 566.5,489.7 567.0,489.9 567.5,489.7 568.0,490.2 568.5,490.4 569.0,490.6 569.5,490.4 570.0,491.2 570.5,491.3 571.0,491.8 571.5,492.0 572.0,492.5 572.5,492.8 573.0,493.4 573.5,493.3 574.0,493.7 574.5,494.3 575.0,494.5 575.5,494.8 576.0,494.8 576.5,495.5 577.0,495.2 577.5,495.8 578.0,495.8 578.5,495.5 579.0,495.3 579.5,495.4 580.0,495.0 580.5,494.9 581.0,494.4 581.5,494.6 582.0,494.0 582.5,493.5 583.0,492.9 583.5,492.9 584.0,492.5 584.5,492.1 585.0,491.2 585.5,491.0 586.0,490.6 586.5,490.5 587.0,489.8 587.5,489.9 588.0,489.9 588.5,489.6 589.0,489.0 589.5,489.0 590.0,489.0 590.5,489.5 591.0,489.5 591.5,489.7 592.0,489.9 592.5,490.2 593.0,490.6 593.5,491.0 594.0,491.6 594.5,491.9 595.0,492.4 595.5,493.0 596.0,493.4 596.5,493.8 597.0,493.9 597.5,494.7 598.0,495.2 598.5,495.4 599.0,496.0 599.5,495.9 600.0,496.6 600.5,496.4 601.0,496.7 601.5,496.5 602.0,496.6 602.5,496.6 603.0,496.4 603.5,496.1 604.0,496.1 604.5,496.2 605.0,495.7 605.5,495.5 606.0,495.1 606.5,494.7 607.0,494.4 607.5,493.8 608.0,493.1 608.5,492.7 609.0,492.4 609.5,491.8 610.0,491.5 610.5,491.6 611.0,491.4 611.5,490.8 612.0,490.9 612.5,490.7 613.0,490.7 613.5,490.7 614.0,490.6 614.5,490.4 615.0,491.0 615.5,490.9 616.0,491.3 616.5,491.4 617.0,491.9 617.5,492.5 618.0,492.4 618.5,493.0 619.0,493.4 619.5,493.8 620.0,494.4 620.5,494.5 621.0,495.1 621.5,495.3 622.0,495.8 622.5,495.5 623.0,495.7 623.5,495.9 624.0,496.4 624.5,495.9 625.0,496.1 625.5,496.3 626.0,496.3 626.5,495.6 627.0,495.6 627.5,495.4 628.0,495.1 628.5,494.8 629.0,494.4 629.5,493.7 630.0,493.3 630.5,492.8 631.0,492.7 631.5,492.0 632.0,491.7 632.5,491.7 633.0,491.2 633.5,490.8 634.0,490.6 634.5,490.3 635.0,490.2 635.5,489.9 636.0,489.7 636.5,489.7 637.0,489.8 637.5,490.1 638.0,490.1 638.5,490.4 639.0,490.9 639.5,491.5 640.0,491.7 640.5,491.9 641.0,492.6 641.5,492.7 642.0,493.2 642.5,493.8 643.0,494.3 643.5,494.9 644.0,495.2 644.5,495.8 645.0,495.8 645.5,496.7 646.0,496.6 646.5,497.2 647.0,496.9 647.5,497.5 648.0,497.2 648.5,497.6 649.0,497.5 649.5,497.4 650.0,497.0 650.5,496.6 651.0,496.5 651.5,496.6 652.0,495.8 652.5,495.7 653.0,495.3 653.5,494.9 654.0,494.2 654.5,493.7 655.0,493.3 655.5,493.4 656.0,492.7 656.5,492.5 657.0,492.1 657.5,491.6 658.0,491.3 658.5,491.1 659.0,491.4 659.5,490.9 660.0,491.4 660.5,491.1 661.0,491.4 661.5,491.2 662.0,491.7 662.5,491.7 663.0,492.0 663.5,492.4 664.0,492.5 664.5,493.0 665.0,493.7 665.5,493.8 666.0,494.2 666.5,494.9 667.0,494.9 667.5,495.2 668.0,495.6 668.5,496.0 669.0,496.2 669.5,496.6 670.0,496.7 670.5,497.0 671.0,496.6 671.5,496.9 672.0,497.0 672.5,496.5 673.0,496.2 673.5,496.2 674.0,495.8 674.5,495.7 675.0,495.5 675.5,494.7 676.0,494.4 676.5,494.2 677.0,493.6 677.5,493.2 678.0,492.9 678.5,492.3 679.0,491.9 679.5,491.7 680.0,491.5 680.5,491.5 681.0,491.0 681.5,490.6 682.0,490.6 682.5,490.8 683.0,490.7 683.5,491.0 684.0,491.1 684.5,491.3 685.0,491.1 685.5,491.8 686.0,491.9 686.5,492.1 687.0,492.5 687.5,493.4 688.0,493.4 688.5,493.8 689.0,494.4 689.5,495.3 690.0,495.5 690.5,496.1 691.0,496.1 691.5,496.7 692.0,497.0 692.5,497.2 693.0,497.8 693.5,497.8 694.0,497.8 694.5,498.4 695.0,498.1 695.5,497.9 696.0,497.7 696.5,497.9 697.0,497.6 697.5,497.1 698.0,497.0 698.5,496.9 699.0,496.4 699.5,495.8 700.0,495.5 700.5,495.2 701.0,494.7 701.5,494.0 702.0,494.0 702.5,493.7 703.0,493.2 703.5,492.9 704.0,492.4 704.5,492.4 705.0,491.8 705.5,491.7 706.0,491.8 706.5,492.0 707.0,491.5 707.5,491.6 708.0,491.7 708.5,492.1 709.0,492.1 709.5,492.4 710.0,493.1 710.5,493.3 711.0,493.9 711.5,494.0 712.0,494.5 712.5,494.5 713.0,495.5 713.5,495.4 714.0,495.9 714.5,496.3 715.0,496.8 715.5,496.8 716.0,497.3 716.5,497.3 717.0,497.2 717.5,497.6 718.0,497.2 718.5,497.6 719.0,497.2 719.5,496.9 720.0,497.1 720.5,496.5 721.0,496.2 721.5,495.9 722.0,495.7 722.5,494.9 723.0,494.7 723.5,494.2 724.0,494.2 724.5,493.2 725.0,493.2 725.5,492.6 726.0,492.4 726.5,492.1 727.0,492.0 727.5,491.4 728.0,491.3 728.5,491.1 729.0,491.5 729.5,491.0 730.0,491.1 730.5,491.4 731.0,491.7 731.5,492.1 732.0,491.9 732.5,492.3 733.0,492.6 733.5,493.3 734.0,493.6 734.5,494.1 735.0,494.8 735.5,495.2 736.0,495.8 736.5,496.3 737.0,496.3 737.5,497.1 738.0,497.2 738.5,497.3 739.0,498.2 739.5,497.9 740.0,498.1 740.5,498.4 741.0,498.5 741.5,498.9 742.0,498.8 742.5,498.4 743.0,498.4 743.5,498.3 744.0,498.1 744.5,497.7 745.0,497.2 745.5,496.6 746.0,496.3 746.5,496.1 747.0,495.6 747.5,495.3 748.0,495.0 748.5,494.6 749.0,493.7 749.5,493.3 750.0,493.4 750.5,492.9 751.0,492.4 751.5,492.4 752.0,492.0 752.5,491.8 753.0,491.8 753.5,491.9 754.0,492.0 754.5,491.7 755.0,492.2 755.5,492.3 756.0,492.5 756.5,492.9 757.0,493.2 757.5,493.1 758.0,493.7 758.5,494.2 759.0,494.5 759.5,494.9 760.0,494.9 760.5,495.7 761.0,495.9 761.5,495.8 762.0,496.2 762.5,496.7 763.0,496.3 763.5,496.6 764.0,496.9 764.5,496.8 765.0,496.4 765.5,496.5 766.0,496.1 766.5,496.0 767.0,495.8 767.5,495.1 768.0,494.8 768.5,494.4 769.0,494.0 769.5,493.4 770.0,493.0 770.5,492.7 771.0,492.3 771.5,491.6 772.0,491.5 772.5,491.3 773.0,490.8 773.5,490.3 774.0,490.2 774.5,489.9 775.0,489.5 775.5,489.6 776.0,489.3 776.5,489.7 777.0,489.5" fill="none" stroke="#e08018" stroke-width="1" shape-rendering="crispEdges" stroke-linejoin="round"/>
<polyline points="72.5,514.4 73.0,514.0 73.5,507.1 74.0,500.9 74.5,495.7 75.0,491.3 75.5,486.6 76.0,484.0 76.5,480.7 77.0,477.7 77.5,475.0 78.0,471.9 78.5,469.0 79.0,466.0 79.5,463.9 80.0,462.0 80.5,460.2 81.0,458.8 81.5,457.3 82.0,455.4 82.5,453.6 83.0,452.0 83.5,450.9 84.0,450.1 84.5,448.5 85.0,447.5 85.5,446.3 86.0,445.4 86.5,444.4 87.0,442.8 87.5,441.9 88.0,441.4 88.5,447.7 89.0,462.1 89.5,477.0 90.0,492.0 90.5,497.7 91.0,503.0 91.5,505.0 92.0,504.0 92.5,503.0 93.0,503.2 93.5,505.1 94.0,506.7 94.5,508.0 95.0,507.9 95.5,507.4 96.0,506.8 96.5,507.4 97.0,508.7 97.5,510.7 98.0,511.9 98.5,509.1 99.0,502.9 99.5,498.9 100.0,494.4 100.5,490.1 101.0,486.0 101.5,483.3 102.0,480.3 102.5,476.9 103.0,474.2 103.5,471.0 104.0,468.3 104.5,465.4 105.0,463.7 105.5,461.7 106.0,459.9 106.5,458.6 107.0,456.9 107.5,455.0 108.0,453.3 108.5,452.2 109.0,450.7 109.5,449.9 110.0,448.5 110.5,447.3 111.0,446.3 111.5,445.2 112.0,444.1 112.5,442.7 113.0,442.1 113.5,440.8 114.0,451.7 114.5,466.2 115.0,481.4 115.5,493.5 116.0,499.2 116.5,505.1 117.0,505.8 117.5,505.1 118.0,504.5 118.5,505.8 119.0,507.4 119.5,508.9 120.0,510.1 120.5,509.6 121.0,508.9 121.5,508.5 122.0,509.8 122.5,510.9 123.0,512.7 123.5,513.9 124.0,509.2 124.5,503.0 125.0,497.9 125.5,493.7 126.0,489.1 126.5,485.5 127.0,482.3 127.5,479.3 128.0,476.5 128.5,473.5 129.0,470.4 129.5,467.7 130.0,464.9 130.5,463.4 131.0,461.3 131.5,459.6 132.0,458.2 132.5,456.6 133.0,454.8 133.5,453.3 134.0,451.8 134.5,450.7 135.0,449.6 135.5,448.6 136.0,447.5 136.5,446.1 137.0,444.9 137.5,444.1 138.0,443.1 138.5,441.9 139.0,441.2 139.5,455.4 140.0,469.9 140.5,485.4 141.0,495.5 141.5,500.6 142.0,506.3 142.5,505.6 143.0,504.6 143.5,503.7 144.0,505.7 144.5,507.3 145.0,508.7 145.5,509.0 146.0,508.8 146.5,508.1 147.0,508.3 147.5,509.2 148.0,510.9 148.5,512.7 149.0,513.6 149.5,507.1 150.0,501.3 150.5,496.7 151.0,492.4 151.5,488.1 152.0,484.7 152.5,481.7 153.0,479.0 153.5,475.8 154.0,472.8 154.5,469.7 155.0,466.7 155.5,464.9 156.0,462.7 156.5,461.1 157.0,459.7 157.5,458.2 158.0,456.5 158.5,454.6 159.0,453.2 159.5,451.9 160.0,450.5 160.5,449.5 161.0,448.4 161.5,447.3 162.0,445.8 162.5,444.6 163.0,444.0 163.5,442.5 164.0,441.9 164.5,444.9 165.0,459.3 165.5,474.5 166.0,489.0 166.5,497.1 167.0,502.3 167.5,505.8 168.0,505.2 168.5,504.0 169.0,503.6 169.5,505.3 170.0,507.1 170.5,508.7 171.0,508.6 171.5,507.8 172.0,507.8 172.5,507.9 173.0,509.5 173.5,511.1 174.0,512.2 174.5,511.8 175.0,505.3 175.5,500.1 176.0,495.8 176.5,491.2 177.0,487.1 177.5,484.1 178.0,481.0 178.5,478.1 179.0,475.5 179.5,472.2 180.0,469.3 180.5,466.5 181.0,464.4 181.5,462.5 182.0,461.2 182.5,459.5 183.0,457.9 183.5,456.1 184.0,454.5 184.5,453.0 185.0,451.5 185.5,450.6 186.0,449.2 186.5,448.4 187.0,446.8 187.5,445.8 188.0,444.6 188.5,443.8 189.0,442.5 189.5,441.8 190.0,448.7 190.5,463.5 191.0,478.4 191.5,492.9 192.0,498.5 192.5,504.0 193.0,507.0 193.5,506.4 194.0,505.9 194.5,506.4 195.0,508.3 195.5,509.9 196.0,511.4 196.5,510.6 197.0,510.2 197.5,509.8 198.0,510.3 198.5,511.9 199.0,513.2 199.5,515.2 200.0,512.0 200.5,504.9 201.0,499.5 201.5,495.0 202.0,490.1 202.5,486.5 203.0,483.5 203.5,480.8 204.0,477.9 204.5,474.5 205.0,471.7 205.5,468.8 206.0,465.6 206.5,464.2 207.0,462.5 207.5,460.6 208.0,459.2 208.5,457.4 209.0,455.5 209.5,454.1 210.0,452.8 210.5,451.5 211.0,450.3 211.5,449.1 212.0,448.2 212.5,446.9 213.0,445.5 213.5,444.4 214.0,443.4 214.5,442.8 215.0,441.6 215.5,452.5 216.0,467.3 216.5,482.2 217.0,494.6 217.5,500.0 218.0,505.7 218.5,506.9 219.0,506.6 219.5,506.2 220.0,507.1 220.5,508.6 221.0,510.5 221.5,511.5 222.0,510.7 222.5,510.7 223.0,510.3 223.5,511.1 224.0,512.6 224.5,514.3 225.0,515.9 225.5,510.5 226.0,503.8 226.5,498.4 227.0,493.9 227.5,489.0 228.0,485.9 228.5,482.9 229.0,480.0 229.5,476.7 230.0,474.2 230.5,471.3 231.0,468.0 231.5,465.5 232.0,463.5 232.5,462.3 233.0,460.4 233.5,458.9 234.0,457.3 234.5,455.3 235.0,454.0 235.5,452.3 236.0,451.0 236.5,450.2 237.0,449.2 237.5,448.1 238.0,446.9 238.5,445.5 239.0,444.7 239.5,443.4 240.0,442.2 240.5,442.3 241.0,456.7 241.5,471.2 242.0,486.2 242.5,496.0 243.0,501.6 243.5,507.1 244.0,506.4 244.5,505.9 245.0,505.7 245.5,507.5 246.0,509.1 246.5,510.3 247.0,510.8 247.5,510.5 248.0,509.9 248.5,509.8 249.0,511.5 249.5,512.6 250.0,514.3 250.5,515.4 251.0,508.9 251.5,502.6 252.0,497.4 252.5,492.6 253.0,488.5 253.5,485.5 254.0,482.0 254.5,479.6 255.0,476.3 255.5,473.1 256.0,470.1 256.5,467.5 257.0,465.2 257.5,463.2 258.0,461.7 258.5,460.2 259.0,458.7 259.5,456.7 260.0,455.3 260.5,453.3 261.0,452.1 261.5,451.0 262.0,449.9 262.5,448.9 263.0,447.6 263.5,446.3 264.0,445.2 264.5,444.0 265.0,443.1 265.5,442.2 266.0,446.2 266.5,460.5 267.0,475.6 267.5,490.3 268.0,497.9 268.5,503.1 269.0,506.3 269.5,505.5 270.0,504.1 270.5,504.0 271.0,505.5 271.5,507.4 272.0,509.1 272.5,508.7 273.0,508.3 273.5,507.9 274.0,508.0 274.5,509.8 275.0,511.1 275.5,512.4 276.0,511.8 276.5,505.2 277.0,500.2 277.5,496.4 278.0,491.8 278.5,487.5 279.0,484.7 279.5,481.9 280.0,478.6 280.5,475.6 281.0,472.5 281.5,469.7 282.0,466.8 282.5,464.9 283.0,463.4 283.5,461.2 284.0,459.7 284.5,458.3 285.0,456.7 285.5,454.9 286.0,453.4 286.5,452.1 287.0,451.3 287.5,449.9 288.0,448.6 288.5,447.3 289.0,446.1 289.5,445.4 290.0,444.3 290.5,442.9 291.0,442.1 291.5,450.0 292.0,464.6 292.5,479.3 293.0,493.6 293.5,499.4 294.0,504.9 294.5,506.7 295.0,505.9 295.5,505.1 296.0,505.8 296.5,507.5 297.0,508.8 297.5,510.3 298.0,509.8 298.5,509.4 299.0,509.3 299.5,509.8 300.0,511.1 300.5,512.6 301.0,514.4 301.5,510.9 302.0,504.6 302.5,499.5 303.0,495.0 303.5,490.4 304.0,487.2 304.5,483.8 305.0,480.8 305.5,477.7 306.0,474.9 306.5,472.2 307.0,469.2 307.5,466.4 308.0,464.8 308.5,462.9 309.0,461.4 309.5,459.3 310.0,458.1 310.5,456.1 311.0,454.3 311.5,453.3 312.0,452.2 312.5,450.8 313.0,449.4 313.5,448.7 314.0,447.5 314.5,446.2 315.0,445.3 315.5,443.8 316.0,442.8 316.5,441.8 317.0,454.0 317.5,468.2 318.0,483.2 318.5,495.0 319.0,500.8 319.5,506.7 320.0,507.3 320.5,506.3 321.0,506.1 321.5,507.0 322.0,508.6 322.5,510.0 323.0,510.9 323.5,510.9 324.0,510.5 324.5,509.9 325.0,510.8 325.5,512.3 326.0,513.8 326.5,515.4 327.0,510.4 327.5,503.5 328.0,498.8 328.5,494.2 329.0,489.3 329.5,486.3 330.0,483.5 330.5,480.4 331.0,477.3 331.5,474.6 332.0,471.4 332.5,468.3 333.0,465.8 333.5,464.5 334.0,462.7 334.5,461.1 335.0,459.3 335.5,457.3 336.0,455.7 336.5,454.2 337.0,453.1 337.5,451.5 338.0,450.9 338.5,449.7 339.0,448.4 339.5,446.9 340.0,446.2 340.5,444.9 341.0,444.0 341.5,443.0 342.0,443.7 342.5,458.0 343.0,472.7 343.5,487.5 344.0,496.6 344.5,502.3 345.0,507.1 345.5,506.7 346.0,505.8 346.5,505.1 347.0,506.7 347.5,508.4 348.0,509.8 348.5,510.0 349.0,509.8 349.5,509.1 350.0,509.0 350.5,510.3 351.0,512.2 351.5,513.5 352.0,514.0 352.5,507.9 353.0,501.9 353.5,497.9 354.0,493.2 354.5,488.5 355.0,485.8 355.5,482.7 356.0,480.0 356.5,476.8 357.0,473.7 357.5,471.0 358.0,467.5 358.5,465.7 359.0,463.7 359.5,462.1 360.0,460.4 360.5,459.1 361.0,457.2 361.5,455.7 362.0,453.8 362.5,453.0 363.0,451.8 363.5,450.3 364.0,449.3 364.5,448.3 365.0,446.9 365.5,446.0 366.0,444.7 366.5,443.7 367.0,443.1 367.5,447.3 368.0,461.7 368.5,476.7 369.0,491.6 369.5,498.3 370.0,504.3 370.5,507.8 371.0,507.8 371.5,507.2 372.0,507.3 372.5,509.3 373.0,510.5 373.5,512.4 374.0,511.9 374.5,512.0 375.0,511.3 375.5,511.7 376.0,512.8 376.5,514.6 377.0,516.0 377.5,514.5 378.0,507.9 378.5,501.5 379.0,496.5 379.5,491.8 380.0,488.2 380.5,485.3 381.0,481.8 381.5,479.0 382.0,476.1 382.5,473.2 383.0,470.2 383.5,467.0 384.0,465.5 384.5,463.4 385.0,461.7 385.5,460.5 386.0,458.4 386.5,456.8 387.0,455.3 387.5,453.7 388.0,452.5 388.5,451.8 389.0,450.3 389.5,449.4 390.0,447.9 390.5,447.1 391.0,445.5 391.5,444.9 392.0,443.8 392.5,443.0 393.0,451.2 393.5,465.8 394.0,480.5 394.5,494.1 395.0,500.2 395.5,505.8 396.0,507.5 396.5,506.9 397.0,505.9 397.5,506.8 398.0,508.6 398.5,510.2 399.0,511.5 399.5,510.7 400.0,510.6 400.5,510.1 401.0,510.7 401.5,512.1 402.0,513.6 402.5,515.3 403.0,511.8 403.5,504.9 404.0,500.1 404.5,495.5 405.0,491.1 405.5,487.4 406.0,484.2 406.5,481.6 407.0,478.3 407.5,475.7 408.0,472.7 408.5,469.2 409.0,466.7 409.5,465.3 410.0,463.2 410.5,461.7 411.0,459.9 411.5,458.1 412.0,456.5 412.5,454.8 413.0,453.5 413.5,452.6 414.0,451.4 414.5,450.5 415.0,449.1 415.5,447.8 416.0,447.0 416.5,445.7 417.0,444.6 417.5,443.8 418.0,442.7 418.5,454.9 419.0,469.9 419.5,484.4 420.0,496.2 420.5,501.2 421.0,506.9 421.5,507.4 422.0,506.5 422.5,506.0 423.0,507.0 423.5,509.0 424.0,510.5 424.5,511.3 425.0,511.0 425.5,510.7 426.0,510.1 426.5,511.3 427.0,512.4 427.5,513.9 428.0,515.7 428.5,510.4 429.0,503.8 429.5,499.1 430.0,494.2 430.5,489.9 431.0,487.0 431.5,483.8 432.0,481.0 432.5,477.5 433.0,474.6 433.5,471.6 434.0,469.0 434.5,466.1 435.0,464.9 435.5,462.9 436.0,461.6 436.5,459.7 437.0,457.9 437.5,456.7 438.0,454.7 438.5,453.6 439.0,452.1 439.5,451.4 440.0,450.3 440.5,448.6 441.0,447.9 441.5,446.4 442.0,445.2 442.5,444.4 443.0,443.6 443.5,444.9 444.0,459.0 444.5,473.7 445.0,488.3 445.5,497.6 446.0,503.2 446.5,508.2 447.0,508.2 447.5,507.5 448.0,507.4 448.5,509.0 449.0,510.5 449.5,512.4 450.0,512.8 450.5,512.0 451.0,511.7 451.5,511.6 452.0,513.1 452.5,514.5 453.0,516.1 453.5,516.2 454.0,509.5 454.5,503.3 455.0,497.8 455.5,493.6 456.0,488.9 456.5,486.3 457.0,483.0 457.5,479.9 458.0,477.1 458.5,474.1 459.0,471.1 459.5,468.3 460.0,465.9 460.5,464.5 461.0,462.9 461.5,461.0 462.0,459.4 462.5,458.0 463.0,456.2 463.5,454.3 464.0,453.1 464.5,451.9 465.0,450.9 465.5,449.6 466.0,448.8 466.5,447.5 467.0,446.3 467.5,445.3 468.0,444.6 468.5,443.2 469.0,448.4 469.5,463.0 470.0,477.7 470.5,492.5 471.0,498.9 471.5,504.3 472.0,507.3 472.5,506.8 473.0,505.8 473.5,505.5 474.0,507.4 474.5,508.6 475.0,510.4 475.5,510.1 476.0,509.5 476.5,509.5 477.0,509.8 477.5,511.2 478.0,512.5 478.5,514.3 479.0,512.4 479.5,506.1 480.0,501.1 480.5,497.1 481.0,492.1 481.5,488.3 482.0,485.4 482.5,482.3 483.0,479.2 483.5,476.6 484.0,473.8 484.5,470.4 485.0,467.4 485.5,465.9 486.0,463.9 486.5,462.4 487.0,460.9 487.5,459.1 488.0,457.3 488.5,455.6 489.0,454.4 489.5,453.5 490.0,452.3 490.5,450.6 491.0,449.7 491.5,448.5 492.0,447.2 492.5,446.3 493.0,445.2 493.5,444.4 494.0,443.1 494.5,452.3 495.0,466.5 495.5,481.6 496.0,494.9 496.5,500.8 497.0,506.6 497.5,508.2 498.0,507.9 498.5,506.9 499.0,508.2 499.5,509.8 500.0,510.9 500.5,512.3 501.0,511.7 501.5,511.6 502.0,511.3 502.5,511.9 503.0,513.6 503.5,514.9 504.0,516.6 504.5,512.5 505.0,506.1 505.5,500.6 506.0,495.5 506.5,491.1 507.0,487.9 507.5,485.0 508.0,481.9 508.5,478.6 509.0,476.1 509.5,473.0 510.0,469.7 510.5,467.0 511.0,465.6 511.5,463.5 512.0,461.9 512.5,460.4 513.0,459.1 513.5,457.5 514.0,455.4 514.5,454.4 515.0,453.2 515.5,452.1 516.0,450.8 516.5,449.8 517.0,448.5 517.5,447.5 518.0,446.1 518.5,444.9 519.0,444.1 519.5,443.1 520.0,456.2 520.5,470.8 521.0,485.5 521.5,496.5 522.0,502.2 522.5,507.8 523.0,507.4 523.5,506.6 524.0,505.5 524.5,507.1 525.0,508.5 525.5,510.3 526.0,511.0 526.5,510.6 527.0,510.1 527.5,509.5 528.0,511.2 528.5,512.5 529.0,513.9 529.5,515.3 530.0,509.5 530.5,503.9 531.0,499.5 531.5,494.8 532.0,490.4 532.5,487.0 533.0,484.1 533.5,481.1 534.0,478.1 534.5,475.1 535.0,472.4 535.5,469.4 536.0,466.6 536.5,465.0 537.0,463.7 537.5,461.9 538.0,460.3 538.5,458.6 539.0,457.0 539.5,455.1 540.0,453.8 540.5,452.8 541.0,451.4 541.5,450.8 542.0,449.4 542.5,448.3 543.0,447.4 543.5,446.2 544.0,444.8 544.5,443.9 545.0,445.9 545.5,460.0 546.0,474.7 546.5,489.5 547.0,498.2 547.5,504.0 548.0,508.9 548.5,508.3 549.0,507.8 549.5,507.4 550.0,509.0 550.5,510.5 551.0,512.5 551.5,512.2 552.0,511.8 552.5,511.4 553.0,511.7 553.5,513.2 554.0,514.4 554.5,516.2 555.0,516.2 555.5,509.3 556.0,503.2 556.5,498.4 557.0,493.7 557.5,489.3 558.0,486.8 558.5,483.5 559.0,480.5 559.5,477.6 560.0,474.4 560.5,471.3 561.0,468.5 561.5,466.5 562.0,464.6 562.5,463.1 563.0,461.7 563.5,459.8 564.0,458.4 564.5,456.7 565.0,454.8 565.5,453.6 566.0,452.8 566.5,451.6 567.0,450.3 567.5,449.1 568.0,448.3 568.5,447.2 569.0,445.7 569.5,444.9 570.0,443.9 570.5,449.5 571.0,464.0 571.5,478.8 572.0,493.7 572.5,499.6 573.0,505.1 573.5,507.6 574.0,506.5 574.5,505.3 575.0,505.6 575.5,506.7 576.0,508.8 576.5,509.9 577.0,510.0 577.5,509.2 578.0,509.0 578.5,509.3 579.0,510.6 579.5,512.5 580.0,514.0 580.5,511.6 581.0,505.7 581.5,501.4 582.0,497.5 582.5,492.4 583.0,488.8 583.5,485.7 584.0,483.0 584.5,480.1 585.0,477.1 585.5,474.0 586.0,470.9 586.5,468.2 587.0,466.0 587.5,464.4 588.0,463.1 588.5,461.2 589.0,459.9 589.5,457.7 590.0,456.3 590.5,454.7 591.0,453.4 591.5,452.3 592.0,451.2 592.5,450.2 593.0,449.0 593.5,447.9 594.0,446.6 594.5,445.9 595.0,444.8 595.5,444.1 596.0,453.5 596.5,467.8 597.0,483.0 597.5,495.7 598.0,501.6 598.5,506.9 599.0,508.1 599.5,507.5 600.0,506.7 600.5,507.4 601.0,508.9 601.5,511.0 602.0,511.8 602.5,511.2 603.0,511.1 603.5,510.6 604.0,511.4 604.5,512.9 605.0,514.7 605.5,515.9 606.0,511.8 606.5,505.7 607.0,500.7 607.5,496.1 608.0,491.5 608.5,488.3 609.0,485.3 609.5,482.2 610.0,479.2 610.5,476.1 611.0,473.5 611.5,470.3 612.0,467.8 612.5,465.9 613.0,464.4 613.5,462.4 614.0,460.8 614.5,459.6 615.0,457.8 615.5,456.1 616.0,454.7 616.5,453.5 617.0,452.2 617.5,451.0 618.0,450.2 618.5,449.0 619.0,447.6 619.5,446.7 620.0,445.4 620.5,444.7 621.0,443.5 621.5,457.3 622.0,471.6 622.5,486.8 623.0,497.5 623.5,502.8 624.0,508.3 624.5,507.9 625.0,506.9 625.5,506.0 626.0,507.6 626.5,509.0 627.0,510.4 627.5,511.2 628.0,511.0 628.5,510.4 629.0,510.1 629.5,511.3 630.0,512.8 630.5,514.6 631.0,516.0 631.5,509.7 632.0,503.8 632.5,499.7 633.0,494.9 633.5,490.9 634.0,487.9 634.5,484.7 635.0,481.5 635.5,478.8 636.0,475.5 636.5,472.9 637.0,469.7 637.5,467.0 638.0,465.9 638.5,464.0 639.0,462.5 639.5,460.8 640.0,459.1 640.5,457.6 641.0,455.6 641.5,454.8 642.0,453.3 642.5,452.0 643.0,451.0 643.5,449.7 644.0,448.5 644.5,447.7 645.0,446.3 645.5,445.3 646.0,444.4 646.5,447.1 647.0,461.4 647.5,476.2 648.0,490.8 648.5,499.2 649.0,504.5 649.5,509.5 650.0,509.0 650.5,508.6 651.0,508.3 651.5,509.8 652.0,511.9 652.5,513.2 653.0,513.4 653.5,513.1 654.0,512.3 654.5,512.6 655.0,513.9 655.5,515.6 656.0,516.9 656.5,516.5 657.0,510.2 657.5,503.7 658.0,498.8 658.5,494.3 659.0,489.8 659.5,487.0 660.0,483.9 660.5,480.8 661.0,477.8 661.5,475.3 662.0,471.9 662.5,469.1 663.0,467.0 663.5,465.1 664.0,463.9 664.5,462.2 665.0,460.6 665.5,458.7 666.0,456.9 666.5,455.5 667.0,454.5 667.5,453.3 668.0,452.0 668.5,450.9 669.0,449.6 669.5,448.9 670.0,447.4 670.5,446.4 671.0,445.6 671.5,444.2 672.0,450.9 672.5,464.8 673.0,479.8 673.5,494.9 674.0,500.6 674.5,506.0 675.0,508.6 675.5,507.5 676.0,506.7 676.5,506.7 677.0,508.8 677.5,510.0 678.0,511.9 678.5,511.4 679.0,511.0 679.5,510.6 680.0,510.8 680.5,512.7 681.0,513.9 681.5,515.7 682.0,513.3 682.5,506.8 683.0,502.2 683.5,497.5 684.0,493.2 684.5,489.5 685.0,486.1 685.5,483.1 686.0,480.3 686.5,477.4 687.0,474.2 687.5,471.2 688.0,468.6 688.5,466.7 689.0,464.9 689.5,463.2 690.0,461.8 690.5,459.9 691.0,458.4 691.5,456.8 692.0,455.4 692.5,454.2 693.0,453.3 693.5,451.6 694.0,451.0 694.5,449.4 695.0,448.2 695.5,447.5 696.0,446.3 696.5,445.3 697.0,444.1 697.5,454.7 698.0,468.8 698.5,484.0 699.0,496.7 699.5,502.1 700.0,507.6 700.5,508.1 701.0,507.5 701.5,506.6 702.0,507.2 702.5,509.0 703.0,510.7 703.5,511.4 704.0,511.4 704.5,511.0 705.0,510.1 705.5,511.2 706.0,512.6 706.5,514.2 707.0,515.6 707.5,511.4 708.0,505.2 708.5,500.9 709.0,496.5 709.5,491.9 710.0,488.8 710.5,485.8 711.0,482.4 711.5,479.5 712.0,476.4 712.5,473.6 713.0,470.5 713.5,468.2 714.0,466.6 714.5,465.1 715.0,463.0 715.5,461.2 716.0,460.0 716.5,458.1 717.0,456.8 717.5,455.2 718.0,454.0 718.5,452.7 719.0,452.0 719.5,450.6 720.0,449.4 720.5,448.3 721.0,447.3 721.5,446.4 722.0,445.2 722.5,444.4 723.0,458.4 723.5,473.1 724.0,488.0 724.5,498.1 725.0,503.8 725.5,509.1 726.0,508.5 726.5,507.8 727.0,506.5 727.5,508.2 728.0,510.1 728.5,511.7 729.0,511.7 729.5,511.7 730.0,511.2 730.5,510.9 731.0,512.2 731.5,513.5 732.0,515.1 732.5,516.8 733.0,510.3 733.5,504.3 734.0,500.1 734.5,495.6 735.0,491.1 735.5,487.7 736.0,485.0 736.5,481.9 737.0,479.1 737.5,476.0 738.0,472.9 738.5,470.2 739.0,467.7 739.5,466.3 740.0,464.4 740.5,462.9 741.0,461.4 741.5,459.3 742.0,458.0 742.5,456.0 743.0,455.3 743.5,453.6 744.0,452.9 744.5,451.5 745.0,450.3 745.5,449.2 746.0,448.1 746.5,447.0 747.0,445.8 747.5,445.1 748.0,448.0 748.5,462.2 749.0,476.9 749.5,492.2 750.0,499.6 750.5,505.5 751.0,510.0 751.5,509.4 752.0,509.2 752.5,509.1 753.0,510.6 753.5,512.1 754.0,513.9 754.5,514.2 755.0,513.4 755.5,513.1 756.0,513.4 756.5,514.6 757.0,516.0 757.5,517.7 758.0,517.0 758.5,510.6 759.0,504.4 759.5,498.8 760.0,494.5 760.5,490.3 761.0,487.1 761.5,484.3 762.0,481.6 762.5,478.3 763.0,475.5 763.5,472.6 764.0,469.2 764.5,467.8 765.0,465.6 765.5,464.1 766.0,462.7 766.5,460.6 767.0,459.2 767.5,457.4 768.0,456.1 768.5,454.6 769.0,453.5 769.5,452.4 770.0,451.2 770.5,450.0 771.0,448.9 771.5,448.0 772.0,446.7 772.5,446.1 773.0,444.9 773.5,452.1 774.0,465.9 774.5,481.2 775.0,495.5 775.5,501.6 776.0,507.0 776.5,511.5 777.0,513.8" fill="none" stroke="#000070" stroke-width="1" shape-rendering="crispEdges" stroke-linejoin="round"/>
<polyline points="72.5,406.1 73.0,405.9 73.5,406.1 74.0,405.5 74.5,405.7 75.0,405.1 75.5,405.2 76.0,404.9 76.5,404.6 77.0,404.6 77.5,403.4 78.0,403.9 78.5,403.1 79.0,402.8 79.5,402.5 80.0,402.3 80.5,401.4 81.0,401.0 81.5,401.1 82.0,399.8 82.5,399.9 83.0,399.5 83.5,398.4 84.0,398.6 84.5,398.3 85.0,398.2 85.5,397.2 86.0,397.5 86.5,396.7 87.0,396.3 87.5,396.5 88.0,395.3 88.5,395.8 89.0,395.5 89.5,395.0 90.0,395.4 90.5,394.7 91.0,394.7 91.5,394.9 92.0,395.4 92.5,395.0 93.0,395.5 93.5,395.8 94.0,396.3 94.5,397.0 95.0,396.9 95.5,397.9 96.0,398.0 96.5,398.6 97.0,398.9 97.5,399.7 98.0,400.7 98.5,401.0 99.0,401.7 99.5,401.9 100.0,402.4 100.5,403.0 101.0,403.9 101.5,404.5 102.0,405.2 102.5,405.0 103.0,406.2 103.5,406.8 104.0,406.9 104.5,406.8 105.0,407.4 105.5,407.5 106.0,408.0 106.5,409.0 107.0,408.9 107.5,409.1 108.0,409.2 108.5,409.1 109.0,408.6 109.5,408.3 110.0,408.0 110.5,407.7 111.0,407.2 111.5,406.8 112.0,405.8 112.5,405.8 113.0,405.0 113.5,404.7 114.0,403.4 114.5,402.9 115.0,402.1 115.5,402.2 116.0,401.6 116.5,400.7 117.0,399.7 117.5,399.5 118.0,398.9 118.5,398.0 119.0,397.1 119.5,396.5 120.0,396.1 120.5,395.5 121.0,395.1 121.5,394.8 122.0,394.7 122.5,393.4 123.0,393.6 123.5,392.8 124.0,392.6 124.5,393.1 125.0,392.9 125.5,393.4 126.0,393.2 126.5,393.0 127.0,393.8 127.5,394.3 128.0,395.1 128.5,395.6 129.0,395.6 129.5,396.1 130.0,396.4 130.5,397.5 131.0,397.6 131.5,398.2 132.0,398.7 132.5,399.3 133.0,400.6 133.5,400.6 134.0,402.0 134.5,401.7 135.0,403.0 135.5,402.7 136.0,403.1 136.5,404.2 137.0,404.0 137.5,404.9 138.0,404.6 138.5,404.6 139.0,405.5 139.5,405.4 140.0,405.5 140.5,405.3 141.0,404.6 141.5,405.1 142.0,405.0 142.5,404.7 143.0,405.1 143.5,404.3 144.0,404.9 144.5,404.5 145.0,403.7 145.5,403.7 146.0,404.2 146.5,404.3 147.0,403.6 147.5,403.7 148.0,403.9 148.5,403.1 149.0,403.5 149.5,402.8 150.0,402.0 150.5,401.9 151.0,401.7 151.5,401.0 152.0,400.8 152.5,399.8 153.0,399.9 153.5,399.0 154.0,398.8 154.5,398.3 155.0,397.6 155.5,397.2 156.0,397.2 156.5,397.0 157.0,396.6 157.5,396.1 158.0,395.7 158.5,395.3 159.0,396.3 159.5,396.3 160.0,396.7 160.5,396.5 161.0,397.1 161.5,397.7 162.0,397.6 162.5,397.3 163.0,396.9 163.5,396.9 164.0,397.2 164.5,396.5 165.0,396.7 165.5,396.7 166.0,397.1 166.5,397.2 167.0,396.9 167.5,396.9 168.0,397.5 168.5,398.0 169.0,398.5 169.5,399.1 170.0,399.6 170.5,399.2 171.0,400.5 171.5,401.0 172.0,401.5 172.5,401.7 173.0,401.9 173.5,402.9 174.0,403.3 174.5,403.6 175.0,404.3 175.5,404.1 176.0,404.2 176.5,405.0 177.0,405.5 177.5,405.2 178.0,406.0 178.5,406.3 179.0,405.7 179.5,406.0 180.0,405.8 180.5,405.4 181.0,404.8 181.5,404.5 182.0,404.7 182.5,404.3 183.0,403.5 183.5,402.7 184.0,402.9 184.5,402.3 185.0,401.2 185.5,401.0 186.0,400.7 186.5,400.1 187.0,399.2 187.5,398.6 188.0,398.1 188.5,397.2 189.0,396.6 189.5,396.1 190.0,396.1 190.5,395.4 191.0,395.1 191.5,394.6 192.0,394.4 192.5,393.7 193.0,393.4 193.5,394.1 194.0,393.4 194.5,393.3 195.0,394.0 195.5,394.4 196.0,394.0 196.5,394.8 197.0,394.8 197.5,395.4 198.0,395.3 198.5,395.8 199.0,397.2 199.5,397.6 200.0,397.7 200.5,398.4 201.0,398.6 201.5,399.7 202.0,400.0 202.5,401.1 203.0,401.5 203.5,402.2 204.0,402.9 204.5,402.8 205.0,403.2 205.5,403.9 206.0,404.4 206.5,404.8 207.0,405.3 207.5,406.3 208.0,407.1 208.5,407.1 209.0,407.9 209.5,408.3 210.0,407.7 210.5,408.5 211.0,408.6 211.5,408.5 212.0,409.5 212.5,408.6 213.0,408.7 213.5,408.6 214.0,408.6 214.5,408.0 215.0,407.4 215.5,407.1 216.0,406.4 216.5,406.7 217.0,406.3 217.5,405.0 218.0,404.3 218.5,404.0 219.0,403.6 219.5,403.6 220.0,403.0 220.5,402.4 221.0,401.1 221.5,401.3 222.0,400.7 222.5,400.1 223.0,399.9 223.5,398.5 224.0,398.2 224.5,398.4 225.0,398.2 225.5,397.6 226.0,397.0 226.5,397.0 227.0,397.0 227.5,396.2 228.0,396.4 228.5,396.5 229.0,396.7 229.5,397.4 230.0,397.6 230.5,398.1 231.0,398.6 231.5,399.7 232.0,399.6 232.5,400.9 233.0,401.0 233.5,401.4 234.0,402.8 234.5,402.6 235.0,403.7 235.5,403.9 236.0,404.2 236.5,403.6 237.0,404.0 237.5,403.7 238.0,404.6 238.5,404.6 239.0,404.5 239.5,404.4 240.0,404.5 240.5,405.1 241.0,404.9 241.5,405.2 242.0,404.9 242.5,405.1 243.0,405.1 243.5,405.9 244.0,405.9 244.5,405.6 245.0,406.4 245.5,405.9 246.0,406.2 246.5,406.0 247.0,406.2 247.5,406.8 248.0,406.3 248.5,406.0 249.0,406.2 249.5,405.9 250.0,406.3 250.5,405.3 251.0,405.9 251.5,404.7 252.0,405.3 252.5,404.8 253.0,404.0 253.5,403.9 254.0,403.4 254.5,403.0 255.0,402.6 255.5,402.4 256.0,402.6 256.5,402.2 257.0,401.8 257.5,400.6 258.0,400.4 258.5,400.7 259.0,399.5 259.5,399.8 260.0,399.0 260.5,399.4 261.0,398.1 261.5,398.6 262.0,397.9 262.5,397.5 263.0,397.1 263.5,397.8 264.0,397.3 264.5,396.8 265.0,397.0 265.5,397.5 266.0,396.9 266.5,397.5 267.0,397.3 267.5,397.6 268.0,398.5 268.5,398.8 269.0,398.6 269.5,398.9 270.0,399.3 270.5,400.3 271.0,400.7 271.5,400.9 272.0,401.4 272.5,402.3 273.0,402.9 273.5,403.6 274.0,403.9 274.5,404.1 275.0,404.5 275.5,405.7 276.0,405.9 276.5,406.8 277.0,406.6 277.5,407.9 278.0,407.9 278.5,408.9 279.0,409.3 279.5,409.4 280.0,409.3 280.5,410.5 281.0,410.4 281.5,411.1 282.0,410.7 282.5,410.9 283.0,411.7 283.5,411.4 284.0,411.0 284.5,410.9 285.0,410.9 285.5,409.9 286.0,410.0 286.5,409.5 287.0,409.1 287.5,408.1 288.0,408.1 288.5,407.6 289.0,407.0 289.5,405.8 290.0,405.5 290.5,404.5 291.0,404.1 291.5,402.7 292.0,402.8 292.5,402.2 293.0,401.0 293.5,400.4 294.0,399.7 294.5,399.1 295.0,398.0 295.5,398.4 296.0,397.2 296.5,396.7 297.0,396.2 297.5,396.0 298.0,396.2 298.5,395.2 299.0,395.1 299.5,395.9 300.0,395.8 300.5,396.0 301.0,397.1 301.5,397.7 302.0,398.3 302.5,399.2 303.0,399.4 303.5,401.0 304.0,401.7 304.5,401.9 305.0,402.9 305.5,404.3 306.0,405.2 306.5,406.0 307.0,406.7 307.5,407.9 308.0,408.5 308.5,409.8 309.0,410.9 309.5,410.9 310.0,412.0 310.5,412.7 311.0,412.7 311.5,413.7 312.0,414.2 312.5,413.9 313.0,413.8 313.5,414.0 314.0,413.5 314.5,413.1 315.0,413.4 315.5,412.9 316.0,412.1 316.5,411.6 317.0,411.3 317.5,411.0 318.0,411.1 318.5,410.4 319.0,410.0 319.5,409.4 320.0,408.9 320.5,407.6 321.0,407.5 321.5,407.4 322.0,406.8 322.5,405.6 323.0,405.2 323.5,404.8 324.0,404.0 324.5,403.7 325.0,402.7 325.5,402.6 326.0,402.2 326.5,401.2 327.0,400.9 327.5,401.4 328.0,400.8 328.5,400.6 329.0,400.0 329.5,400.0 330.0,399.8 330.5,399.6 331.0,398.6 331.5,399.2 332.0,398.9 332.5,399.5 333.0,399.3 333.5,399.8 334.0,400.4 334.5,400.4 335.0,400.3 335.5,400.9 336.0,401.1 336.5,402.0 337.0,401.7 337.5,402.1 338.0,402.9 338.5,402.7 339.0,403.7 339.5,404.5 340.0,404.5 340.5,404.7 341.0,405.3 341.5,405.8 342.0,405.9 342.5,406.3 343.0,406.7 343.5,407.3 344.0,407.8 344.5,408.1 345.0,408.4 345.5,408.6 346.0,409.4 346.5,410.0 347.0,410.0 347.5,410.2 348.0,410.5 348.5,410.3 349.0,411.0 349.5,410.9 350.0,411.0 350.5,411.0 351.0,410.7 351.5,410.4 352.0,410.1 352.5,409.8 353.0,409.8 353.5,409.4 354.0,409.3 354.5,408.4 355.0,408.4 355.5,408.5 356.0,407.5 356.5,407.4 357.0,406.8 357.5,406.2 358.0,406.4 358.5,405.3 359.0,405.2 359.5,404.1 360.0,403.6 360.5,403.9 361.0,403.0 361.5,402.1 362.0,402.0 362.5,401.5 363.0,401.4 363.5,400.3 364.0,400.0 364.5,400.3 365.0,399.7 365.5,398.8 366.0,398.6 366.5,398.3 367.0,398.3 367.5,398.0 368.0,398.0 368.5,397.8 369.0,397.3 369.5,397.4 370.0,397.2 370.5,397.4 371.0,397.3 371.5,397.8 372.0,398.0 372.5,398.5 373.0,398.0 373.5,399.1 374.0,398.6 374.5,399.8 375.0,400.1 375.5,400.4 376.0,401.4 376.5,401.4 377.0,401.7 377.5,402.5 378.0,403.1 378.5,403.2 379.0,403.4 379.5,403.8 380.0,404.2 380.5,404.7 381.0,404.5 381.5,404.9 382.0,405.2 382.5,405.1 383.0,405.0 383.5,405.3 384.0,405.1 384.5,404.6 385.0,404.2 385.5,403.7 386.0,403.5 386.5,403.0 387.0,403.0 387.5,402.6 388.0,401.7 388.5,402.1 389.0,401.1 389.5,401.2 390.0,400.8 390.5,400.5 391.0,399.4 391.5,399.3 392.0,399.4 392.5,398.2 393.0,398.0 393.5,398.3 394.0,398.0 394.5,398.3 395.0,398.0 395.5,397.9 396.0,398.6 396.5,398.3 397.0,398.5 397.5,399.0 398.0,399.0 398.5,399.4 399.0,400.0 399.5,400.1 400.0,401.2 400.5,401.4 401.0,401.7 401.5,401.8 402.0,402.6 402.5,403.2 403.0,403.9 403.5,404.4 404.0,405.3 404.5,405.9 405.0,406.0 405.5,406.5 406.0,407.2 406.5,408.0 407.0,407.9 407.5,408.5 408.0,409.3 408.5,409.0 409.0,409.6 409.5,410.6 410.0,410.8 410.5,410.7 411.0,410.6 411.5,411.6 412.0,411.6 412.5,411.8 413.0,411.8 413.5,411.6 414.0,410.9 414.5,410.3 415.0,410.2 415.5,410.1 416.0,409.7 416.5,409.0 417.0,408.5 417.5,408.5 418.0,408.0 418.5,407.3 419.0,407.4 419.5,406.5 420.0,405.3 420.5,405.1 421.0,404.9 421.5,403.9 422.0,403.7 422.5,402.5 423.0,402.2 423.5,402.2 424.0,401.4 424.5,401.0 425.0,400.0 425.5,399.9 426.0,399.5 426.5,398.8 427.0,398.8 427.5,398.4 428.0,398.6 428.5,397.9 429.0,397.5 429.5,397.0 430.0,396.9 430.5,397.7 431.0,397.3 431.5,397.6 432.0,398.1 432.5,398.9 433.0,399.7 433.5,400.1 434.0,400.9 434.5,400.8 435.0,401.5 435.5,402.9 436.0,403.2 436.5,404.3 437.0,404.7 437.5,405.2 438.0,406.0 438.5,406.5 439.0,407.9 439.5,408.2 440.0,408.4 440.5,409.0 441.0,409.3 441.5,409.3 442.0,410.4 442.5,410.3 443.0,410.7 443.5,410.1 444.0,410.2 444.5,409.7 445.0,409.4 445.5,410.1 446.0,409.9 446.5,409.2 447.0,409.6 447.5,409.3 448.0,408.6 448.5,408.8 449.0,409.0 449.5,408.3 450.0,408.6 450.5,407.8 451.0,407.8 451.5,408.1 452.0,407.5 452.5,407.6 453.0,408.0 453.5,407.4 454.0,407.5 454.5,406.7 455.0,406.4 455.5,406.2 456.0,405.7 456.5,406.1 457.0,405.0 457.5,404.8 458.0,403.9 458.5,403.9 459.0,403.3 459.5,402.8 460.0,402.1 460.5,401.7 461.0,402.0 461.5,401.1 462.0,400.6 462.5,400.2 463.0,400.0 463.5,399.7 464.0,399.3 464.5,399.8 465.0,399.3 465.5,399.3 466.0,400.0 466.5,399.5 467.0,399.9 467.5,400.7 468.0,400.3 468.5,400.9 469.0,401.6 469.5,401.9 470.0,401.6 470.5,402.2 471.0,403.0 471.5,403.0 472.0,404.0 472.5,403.7 473.0,404.9 473.5,404.9 474.0,405.1 474.5,405.8 475.0,406.0 475.5,407.0 476.0,407.0 476.5,408.1 477.0,408.2 477.5,408.4 478.0,408.7 478.5,409.5 479.0,409.4 479.5,410.5 480.0,410.0 480.5,410.7 481.0,411.0 481.5,411.0 482.0,411.7 482.5,411.5 483.0,412.0 483.5,412.0 484.0,411.7 484.5,411.6 485.0,411.1 485.5,410.9 486.0,411.2 486.5,410.3 487.0,410.2 487.5,409.2 488.0,409.1 488.5,408.4 489.0,407.9 489.5,407.1 490.0,406.3 490.5,405.9 491.0,405.1 491.5,404.4 492.0,404.3 492.5,403.2 493.0,402.7 493.5,402.5 494.0,401.8 494.5,401.2 495.0,400.6 495.5,399.3 496.0,399.0 496.5,398.2 497.0,398.4 497.5,398.0 498.0,397.3 498.5,397.1 499.0,397.0 499.5,396.9 500.0,396.2 500.5,397.0 501.0,396.7 501.5,397.3 502.0,397.2 502.5,397.5 503.0,398.7 503.5,398.9 504.0,399.4 504.5,399.3 505.0,399.8 505.5,400.5 506.0,401.2 506.5,401.9 507.0,402.6 507.5,403.0 508.0,403.9 508.5,404.9 509.0,405.1 509.5,406.4 510.0,406.8 510.5,407.6 511.0,407.7 511.5,408.4 512.0,409.2 512.5,409.4 513.0,409.5 513.5,410.8 514.0,411.1 514.5,411.0 515.0,411.0 515.5,412.1 516.0,412.0 516.5,411.5 517.0,411.5 517.5,411.2 518.0,411.6 518.5,410.8 519.0,411.1 519.5,410.6 520.0,409.6 520.5,409.8 521.0,409.0 521.5,408.9 522.0,408.5 522.5,407.4 523.0,406.7 523.5,407.0 524.0,405.9 524.5,405.9 525.0,405.1 525.5,404.5 526.0,404.1 526.5,403.3 527.0,402.6 527.5,401.7 528.0,401.8 528.5,401.0 529.0,400.6 529.5,400.6 530.0,399.4 530.5,399.6 531.0,398.6 531.5,398.9 532.0,398.7 532.5,397.9 533.0,398.0 533.5,398.3 534.0,398.0 534.5,398.0 535.0,397.9 535.5,397.9 536.0,398.5 536.5,398.9 537.0,399.0 537.5,399.4 538.0,399.7 538.5,400.6 539.0,401.1 539.5,401.1 540.0,401.6 540.5,402.4 541.0,402.8 541.5,403.8 542.0,403.8 542.5,404.3 543.0,405.4 543.5,405.2 544.0,406.2 544.5,406.5 545.0,407.5 545.5,407.7 546.0,408.4 546.5,408.3 547.0,409.3 547.5,409.6 548.0,409.9 548.5,410.6 549.0,411.0 549.5,410.6 550.0,411.0 550.5,411.3 551.0,411.4 551.5,411.4 552.0,411.8 552.5,411.6 553.0,412.0 553.5,411.6 554.0,411.0 554.5,411.0 555.0,411.0 555.5,410.6 556.0,410.1 556.5,409.7 557.0,409.3 557.5,410.0 558.0,409.4 558.5,408.3 559.0,408.6 559.5,408.4 560.0,407.6 560.5,406.8 561.0,406.7 561.5,406.3 562.0,405.6 562.5,405.6 563.0,404.7 563.5,405.2 564.0,404.5 564.5,404.2 565.0,404.1 565.5,403.5 566.0,402.8 566.5,402.5 567.0,402.2 567.5,401.8 568.0,402.3 568.5,402.2 569.0,401.5 569.5,401.3 570.0,401.6 570.5,401.9 571.0,402.1 571.5,401.5 572.0,402.3 572.5,402.6 573.0,402.7 573.5,402.5 574.0,402.7 574.5,403.6 575.0,403.4 575.5,403.7 576.0,404.3 576.5,404.4 577.0,405.3 577.5,405.0 578.0,405.2 578.5,406.1 579.0,406.6 579.5,407.2 580.0,407.4 580.5,408.0 581.0,408.5 581.5,408.4 582.0,408.8 582.5,408.8 583.0,409.3 583.5,409.9 584.0,409.7 584.5,410.6 585.0,410.3 585.5,410.9 586.0,411.6 586.5,411.0 587.0,411.1 587.5,411.6 588.0,411.5 588.5,412.2 589.0,411.4 589.5,412.1 590.0,411.9 590.5,411.5 591.0,410.9 591.5,410.4 592.0,410.4 592.5,409.8 593.0,409.2 593.5,408.6 594.0,408.2 594.5,407.9 595.0,407.5 595.5,407.0 596.0,405.6 596.5,405.1 597.0,404.7 597.5,404.2 598.0,403.4 598.5,402.6 599.0,401.9 599.5,401.6 600.0,401.2 600.5,401.2 601.0,400.6 601.5,400.1 602.0,399.8 602.5,399.4 603.0,398.8 603.5,398.7 604.0,397.7 604.5,398.1 605.0,397.9 605.5,397.7 606.0,398.3 606.5,399.0 607.0,398.9 607.5,399.5 608.0,399.7 608.5,400.3 609.0,401.4 609.5,401.2 610.0,402.0 610.5,403.2 611.0,403.8 611.5,404.2 612.0,405.5 612.5,406.0 613.0,407.0 613.5,407.6 614.0,408.5 614.5,409.2 615.0,409.8 615.5,410.2 616.0,410.9 616.5,412.2 617.0,412.4 617.5,412.5 618.0,413.7 618.5,413.5 619.0,413.6 619.5,414.3 620.0,414.3 620.5,414.4 621.0,414.3 621.5,413.7 622.0,413.9 622.5,413.1 623.0,413.3 623.5,413.0 624.0,412.1 624.5,412.1 625.0,411.4 625.5,411.3 626.0,411.3 626.5,410.5 627.0,410.2 627.5,409.7 628.0,408.6 628.5,409.0 629.0,408.2 629.5,407.1 630.0,407.3 630.5,406.4 631.0,405.7 631.5,406.0 632.0,405.2 632.5,405.0 633.0,404.0 633.5,404.2 634.0,403.1 634.5,403.0 635.0,402.8 635.5,402.2 636.0,402.6 636.5,402.0 637.0,401.9 637.5,402.2 638.0,402.1 638.5,402.8 639.0,402.8 639.5,403.4 640.0,403.6 640.5,404.4 641.0,404.9 641.5,404.7 642.0,405.8 642.5,405.8 643.0,406.7 643.5,407.0 644.0,407.4 644.5,407.0 645.0,407.4 645.5,407.8 646.0,408.1 646.5,408.0 647.0,407.5 647.5,408.2 648.0,407.9 648.5,408.6 649.0,409.1 649.5,408.6 650.0,409.7 650.5,409.7 651.0,409.5 651.5,409.7 652.0,410.1 652.5,410.7 653.0,410.6 653.5,410.3 654.0,410.4 654.5,410.5 655.0,411.3 655.5,410.6 656.0,410.8 656.5,410.3 657.0,410.5 657.5,410.0 658.0,409.5 658.5,409.9 659.0,409.3 659.5,409.1 660.0,408.8 660.5,408.6 661.0,407.2 661.5,407.1 662.0,406.5 662.5,406.4 663.0,406.3 663.5,405.8 664.0,404.5 664.5,404.2 665.0,404.3 665.5,403.7 666.0,402.9 666.5,402.5 667.0,401.7 667.5,401.9 668.0,401.0 668.5,401.1 669.0,400.4 669.5,399.4 670.0,399.3 670.5,398.8 671.0,399.2 671.5,398.5 672.0,397.7 672.5,397.6 673.0,397.5 673.5,397.4 674.0,397.3 674.5,397.0 675.0,396.9 675.5,396.7 676.0,397.5 676.5,397.5 677.0,397.6 677.5,398.4 678.0,399.3 678.5,398.9 679.0,399.5 679.5,400.6 680.0,400.8 680.5,401.4 681.0,402.3 681.5,402.7 682.0,403.7 682.5,404.4 683.0,405.5 683.5,406.3 684.0,406.0 684.5,407.2 685.0,408.1 685.5,408.9 686.0,409.4 686.5,409.9 687.0,410.5 687.5,410.8 688.0,411.2 688.5,412.2 689.0,412.6 689.5,413.1 690.0,413.1 690.5,413.0 691.0,413.7 691.5,413.7 692.0,413.2 692.5,413.1 693.0,412.5 693.5,412.3 694.0,411.8 694.5,411.0 695.0,410.7 695.5,410.2 696.0,410.3 696.5,409.2 697.0,408.4 697.5,407.6 698.0,406.9 698.5,406.3 699.0,405.4 699.5,404.6 700.0,404.8 700.5,403.7 701.0,403.0 701.5,402.5 702.0,401.6 702.5,400.8 703.0,400.2 703.5,399.9 704.0,399.4 704.5,399.4 705.0,398.8 705.5,398.9 706.0,398.0 706.5,398.3 707.0,397.8 707.5,397.5 708.0,397.8 708.5,398.5 709.0,399.2 709.5,399.0 710.0,399.8 710.5,400.0 711.0,400.9 711.5,400.7 712.0,401.7 712.5,402.7 713.0,402.7 713.5,403.3 714.0,403.8 714.5,404.6 715.0,405.4 715.5,406.5 716.0,406.6 716.5,407.5 717.0,407.9 717.5,408.9 718.0,409.8 718.5,410.1 719.0,410.2 719.5,411.2 720.0,411.8 720.5,411.8 721.0,411.7 721.5,412.7 722.0,413.0 722.5,412.6 723.0,412.3 723.5,412.2 724.0,412.4 724.5,412.6 725.0,412.2 725.5,412.3 726.0,411.3 726.5,411.2 727.0,411.4 727.5,411.0 728.0,410.4 728.5,410.4 729.0,409.7 729.5,409.1 730.0,409.1 730.5,408.4 731.0,408.6 731.5,408.0 732.0,407.7 732.5,407.5 733.0,406.8 733.5,406.6 734.0,405.8 734.5,406.3 735.0,405.6 735.5,405.7 736.0,404.4 736.5,404.6 737.0,404.4 737.5,403.7 738.0,403.2 738.5,403.0 739.0,402.8 739.5,403.2 740.0,402.3 740.5,402.8 741.0,402.3 741.5,402.2 742.0,402.2 742.5,402.1 743.0,402.3 743.5,402.4 744.0,402.3 744.5,402.9 745.0,402.6 745.5,403.3 746.0,403.6 746.5,404.0 747.0,403.8 747.5,404.6 748.0,405.2 748.5,405.1 749.0,405.3 749.5,405.9 750.0,406.8 750.5,406.4 751.0,406.8 751.5,407.7 752.0,408.3 752.5,408.9 753.0,409.0 753.5,410.0 754.0,409.7 754.5,410.7 755.0,410.5 755.5,410.9 756.0,411.4 756.5,411.7 757.0,412.5 757.5,413.0 758.0,412.9 758.5,414.0 759.0,413.7 759.5,413.8 760.0,414.1 760.5,414.9 761.0,415.2 761.5,414.7 762.0,414.7 762.5,415.5 763.0,414.8 763.5,415.2 764.0,414.4 764.5,414.1 765.0,413.3 765.5,413.3 766.0,412.3 766.5,411.5 767.0,411.4 767.5,409.9 768.0,409.7 768.5,408.3 769.0,408.0 769.5,407.0 770.0,406.6 770.5,405.0 771.0,404.7 771.5,403.8 772.0,403.5 772.5,402.8 773.0,401.8 773.5,400.8 774.0,400.3 774.5,399.8 775.0,399.5 775.5,398.9 776.0,398.5 776.5,398.9 777.0,398.6" fill="none" stroke="#c00808" stroke-width="1" shape-rendering="crispEdges" stroke-linejoin="round"/>
<polyline points="72.5,376.5 73.0,376.2 73.5,374.9 74.0,373.4 74.5,370.4 75.0,369.0 75.5,366.4 76.0,364.7 76.5,363.6 77.0,362.9 77.5,360.3 78.0,359.3 78.5,359.1 79.0,359.0 79.5,358.7 80.0,358.0 80.5,360.2 81.0,360.0 81.5,360.4 82.0,361.1 82.5,362.1 83.0,363.7 83.5,363.2 84.0,364.6 84.5,365.4 85.0,365.6 85.5,366.5 86.0,366.3 86.5,366.9 87.0,367.8 87.5,369.3 88.0,369.4 88.5,369.9 89.0,371.0 89.5,371.3 90.0,371.7 90.5,373.2 91.0,373.6 91.5,373.4 92.0,374.6 92.5,375.1 93.0,376.3 93.5,376.6 94.0,376.4 94.5,375.4 95.0,371.6 95.5,370.1 96.0,368.7 96.5,365.7 97.0,364.6 97.5,362.3 98.0,362.0 98.5,360.9 99.0,359.6 99.5,359.3 100.0,357.8 100.5,358.6 101.0,359.3 101.5,360.8 102.0,361.7 102.5,361.6 103.0,362.7 103.5,362.3 104.0,364.2 104.5,364.7 105.0,366.1 105.5,366.4 106.0,366.1 106.5,367.0 107.0,368.1 107.5,367.6 108.0,369.1 108.5,369.2 109.0,369.7 109.5,370.3 110.0,372.2 110.5,371.7 111.0,372.5 111.5,373.4 112.0,374.9 112.5,374.1 113.0,375.4 113.5,376.2 114.0,377.4 114.5,377.9 115.0,377.2 115.5,373.8 116.0,371.8 116.5,369.6 117.0,368.6 117.5,366.9 118.0,363.8 118.5,362.3 119.0,361.1 119.5,360.0 120.0,359.5 120.5,359.0 121.0,358.3 121.5,359.2 122.0,360.4 122.5,361.8 123.0,362.1 123.5,362.5 124.0,363.4 124.5,364.3 125.0,363.8 125.5,366.1 126.0,366.5 126.5,367.4 127.0,367.9 127.5,367.8 128.0,368.5 128.5,368.6 129.0,370.2 129.5,369.8 130.0,370.5 130.5,371.4 131.0,371.9 131.5,372.9 132.0,373.0 132.5,373.5 133.0,374.4 133.5,375.0 134.0,376.1 134.5,376.1 135.0,378.2 135.5,378.4 136.0,375.1 136.5,372.9 137.0,370.8 137.5,368.6 138.0,366.2 138.5,365.7 139.0,364.2 139.5,361.8 140.0,360.5 140.5,358.7 141.0,357.8 141.5,357.7 142.0,357.7 142.5,358.3 143.0,360.8 143.5,360.8 144.0,360.8 144.5,362.2 145.0,362.0 145.5,363.6 146.0,365.1 146.5,365.6 147.0,365.9 147.5,365.8 148.0,366.6 148.5,366.9 149.0,368.7 149.5,368.9 150.0,370.0 150.5,369.8 151.0,370.2 151.5,371.9 152.0,372.8 152.5,373.2 153.0,373.7 153.5,374.4 154.0,374.8 154.5,374.5 155.0,375.7 155.5,376.0 156.0,376.0 156.5,375.2 157.0,373.3 157.5,371.1 158.0,369.8 158.5,368.3 159.0,365.6 159.5,364.8 160.0,363.4 160.5,362.0 161.0,359.8 161.5,358.6 162.0,357.9 162.5,358.3 163.0,359.8 163.5,360.6 164.0,360.8 164.5,361.9 165.0,362.9 165.5,362.4 166.0,364.2 166.5,365.4 167.0,365.9 167.5,366.5 168.0,366.8 168.5,366.9 169.0,368.7 169.5,368.6 170.0,370.2 170.5,371.1 171.0,370.8 171.5,371.5 172.0,373.1 172.5,373.4 173.0,373.1 173.5,373.7 174.0,374.4 174.5,376.4 175.0,376.9 175.5,376.4 176.0,378.2 176.5,379.2 177.0,379.2 177.5,376.2 178.0,374.1 178.5,371.0 179.0,368.6 179.5,368.3 180.0,365.8 180.5,363.9 181.0,363.1 181.5,360.8 182.0,360.5 182.5,359.5 183.0,357.8 183.5,358.2 184.0,359.7 184.5,359.9 185.0,361.0 185.5,361.2 186.0,363.3 186.5,363.1 187.0,363.9 187.5,364.9 188.0,366.1 188.5,365.9 189.0,367.5 189.5,367.4 190.0,368.1 190.5,368.8 191.0,368.5 191.5,369.9 192.0,370.1 192.5,370.4 193.0,372.5 193.5,372.0 194.0,373.2 194.5,374.2 195.0,374.6 195.5,374.8 196.0,375.7 196.5,376.4 197.0,377.5 197.5,376.8 198.0,376.9 198.5,374.0 199.0,371.8 199.5,370.6 200.0,368.1 200.5,366.4 201.0,365.1 201.5,363.8 202.0,361.6 202.5,360.8 203.0,359.6 203.5,359.0 204.0,358.6 204.5,359.5 205.0,361.2 205.5,361.5 206.0,362.6 206.5,363.5 207.0,363.0 207.5,364.2 208.0,365.6 208.5,366.1 209.0,365.5 209.5,366.2 210.0,367.5 210.5,367.5 211.0,368.4 211.5,368.8 212.0,370.5 212.5,371.4 213.0,372.2 213.5,371.5 214.0,373.2 214.5,373.7 215.0,373.4 215.5,375.4 216.0,376.2 216.5,375.4 217.0,377.4 217.5,377.0 218.0,377.8 218.5,379.3 219.0,376.8 219.5,373.4 220.0,371.8 220.5,370.0 221.0,367.9 221.5,365.9 222.0,364.6 222.5,363.9 223.0,361.5 223.5,361.4 224.0,360.4 224.5,359.1 225.0,360.4 225.5,360.5 226.0,362.9 226.5,363.3 227.0,364.4 227.5,363.5 228.0,364.5 228.5,364.8 229.0,366.8 229.5,366.5 230.0,367.0 230.5,368.1 231.0,369.7 231.5,370.2 232.0,369.8 232.5,370.2 233.0,372.3 233.5,372.3 234.0,373.1 234.5,372.7 235.0,373.2 235.5,375.0 236.0,375.1 236.5,375.1 237.0,377.3 237.5,377.3 238.0,378.2 238.5,377.5 239.0,379.5 239.5,377.3 240.0,376.3 240.5,373.3 241.0,371.0 241.5,369.4 242.0,368.2 242.5,365.3 243.0,363.5 243.5,362.8 244.0,361.2 244.5,360.0 245.0,359.3 245.5,359.3 246.0,360.2 246.5,361.9 247.0,361.9 247.5,363.0 248.0,363.2 248.5,364.3 249.0,364.4 249.5,365.5 250.0,365.8 250.5,367.8 251.0,368.2 251.5,368.2 252.0,369.4 252.5,371.0 253.0,370.1 253.5,372.1 254.0,372.1 254.5,372.8 255.0,374.1 255.5,374.0 256.0,374.8 256.5,375.8 257.0,377.0 257.5,376.5 258.0,378.0 258.5,378.4 259.0,378.9 259.5,379.2 260.0,379.7 260.5,376.7 261.0,374.4 261.5,372.0 262.0,371.0 262.5,368.2 263.0,366.1 263.5,364.3 264.0,364.1 264.5,362.8 265.0,361.4 265.5,359.8 266.0,359.1 266.5,359.4 267.0,360.8 267.5,361.3 268.0,363.3 268.5,364.1 269.0,364.1 269.5,364.2 270.0,366.3 270.5,365.8 271.0,366.6 271.5,366.6 272.0,368.0 272.5,368.8 273.0,369.6 273.5,369.7 274.0,370.9 274.5,370.7 275.0,371.8 275.5,372.1 276.0,373.3 276.5,373.3 277.0,373.9 277.5,375.1 278.0,375.6 278.5,376.9 279.0,377.4 279.5,378.4 280.0,378.9 280.5,379.6 281.0,379.2 281.5,375.9 282.0,373.6 282.5,372.7 283.0,369.2 283.5,368.4 284.0,366.6 284.5,364.0 285.0,364.1 285.5,363.1 286.0,361.7 286.5,361.2 287.0,360.4 287.5,361.4 288.0,362.8 288.5,363.6 289.0,364.4 289.5,364.7 290.0,366.0 290.5,366.3 291.0,367.1 291.5,366.9 292.0,367.3 292.5,368.1 293.0,369.2 293.5,369.4 294.0,371.4 294.5,371.6 295.0,372.4 295.5,373.1 296.0,373.8 296.5,374.1 297.0,373.9 297.5,376.0 298.0,376.5 298.5,376.7 299.0,377.4 299.5,378.3 300.0,377.8 300.5,379.7 301.0,379.4 301.5,379.7 302.0,377.9 302.5,376.5 303.0,373.4 303.5,372.4 304.0,371.0 304.5,368.5 305.0,366.7 305.5,365.5 306.0,364.6 306.5,363.8 307.0,362.7 307.5,362.2 308.0,361.9 308.5,363.6 309.0,363.5 309.5,364.7 310.0,364.4 310.5,365.2 311.0,366.2 311.5,367.6 312.0,368.3 312.5,368.9 313.0,368.9 313.5,369.9 314.0,370.4 314.5,371.1 315.0,371.0 315.5,373.0 316.0,372.4 316.5,374.4 317.0,374.9 317.5,373.9 318.0,375.3 318.5,376.5 319.0,377.4 319.5,377.0 320.0,377.3 320.5,377.7 321.0,379.6 321.5,378.9 322.0,380.1 322.5,378.5 323.0,376.8 323.5,375.3 324.0,371.7 324.5,370.9 325.0,368.5 325.5,367.5 326.0,365.6 326.5,363.4 327.0,363.4 327.5,361.7 328.0,360.2 328.5,360.6 329.0,361.3 329.5,361.8 330.0,363.0 330.5,363.7 331.0,365.4 331.5,364.6 332.0,366.6 332.5,367.5 333.0,366.9 333.5,369.0 334.0,369.3 334.5,370.3 335.0,369.9 335.5,370.7 336.0,371.4 336.5,373.2 337.0,373.1 337.5,373.3 338.0,374.1 338.5,374.4 339.0,374.7 339.5,375.4 340.0,377.3 340.5,377.0 341.0,378.8 341.5,378.2 342.0,378.8 342.5,379.9 343.0,379.9 343.5,377.9 344.0,376.6 344.5,374.2 345.0,372.0 345.5,369.7 346.0,368.4 346.5,366.8 347.0,364.6 347.5,363.6 348.0,361.3 348.5,361.7 349.0,360.7 349.5,360.8 350.0,361.3 350.5,363.7 351.0,363.0 351.5,364.4 352.0,365.0 352.5,365.6 353.0,367.2 353.5,368.3 354.0,367.8 354.5,369.2 355.0,369.3 355.5,370.4 356.0,370.8 356.5,371.1 357.0,371.8 357.5,372.6 358.0,374.5 358.5,374.4 359.0,374.6 359.5,376.5 360.0,377.3 360.5,377.0 361.0,377.1 361.5,377.8 362.0,378.3 362.5,379.4 363.0,379.6 363.5,380.5 364.0,379.8 364.5,378.0 365.0,376.4 365.5,374.0 366.0,371.5 366.5,369.7 367.0,368.2 367.5,366.4 368.0,365.0 368.5,363.4 369.0,362.8 369.5,363.4 370.0,362.4 370.5,363.8 371.0,363.5 371.5,364.3 372.0,365.1 372.5,366.1 373.0,366.9 373.5,368.5 374.0,369.0 374.5,369.7 375.0,368.9 375.5,369.6 376.0,371.4 376.5,372.4 377.0,372.3 377.5,373.2 378.0,372.8 378.5,374.1 379.0,375.7 379.5,376.2 380.0,376.9 380.5,377.7 381.0,377.0 381.5,377.4 382.0,378.1 382.5,379.4 383.0,380.3 383.5,381.4 384.0,381.6 384.5,382.1 385.0,379.8 385.5,376.8 386.0,374.6 386.5,371.5 387.0,370.8 387.5,367.9 388.0,367.4 388.5,365.4 389.0,363.4 389.5,362.0 390.0,361.3 390.5,361.4 391.0,360.8 391.5,362.5 392.0,363.5 392.5,363.9 393.0,364.4 393.5,365.8 394.0,365.5 394.5,366.8 395.0,367.8 395.5,369.4 396.0,369.6 396.5,370.7 397.0,370.7 397.5,370.9 398.0,371.6 398.5,373.6 399.0,373.8 399.5,373.8 400.0,374.0 400.5,375.5 401.0,376.5 401.5,376.7 402.0,377.0 402.5,378.4 403.0,379.5 403.5,378.9 404.0,379.2 404.5,380.4 405.0,381.2 405.5,380.9 406.0,377.7 406.5,376.5 407.0,374.3 407.5,371.9 408.0,369.5 408.5,369.2 409.0,366.5 409.5,366.0 410.0,363.8 410.5,362.8 411.0,363.1 411.5,362.3 412.0,362.6 412.5,363.5 413.0,364.6 413.5,365.7 414.0,366.9 414.5,366.2 415.0,367.3 415.5,367.7 416.0,369.7 416.5,368.8 417.0,369.3 417.5,370.0 418.0,371.2 418.5,372.8 419.0,373.4 419.5,373.7 420.0,374.8 420.5,375.3 421.0,374.8 421.5,375.2 422.0,377.1 422.5,377.4 423.0,376.7 423.5,378.4 424.0,378.5 424.5,379.1 425.0,379.6 425.5,379.9 426.0,380.2 426.5,378.4 427.0,376.2 427.5,375.1 428.0,371.5 428.5,371.1 429.0,367.9 429.5,366.6 430.0,366.0 430.5,364.7 431.0,362.9 431.5,361.4 432.0,361.6 432.5,361.6 433.0,362.8 433.5,364.6 434.0,363.9 434.5,365.4 435.0,366.9 435.5,367.6 436.0,367.1 436.5,367.8 437.0,368.6 437.5,370.9 438.0,370.4 438.5,372.0 439.0,373.0 439.5,372.7 440.0,373.3 440.5,375.2 441.0,375.3 441.5,375.4 442.0,376.9 442.5,376.9 443.0,377.5 443.5,377.7 444.0,379.7 444.5,380.7 445.0,380.8 445.5,382.1 446.0,381.1 446.5,382.1 447.0,381.7 447.5,380.0 448.0,377.5 448.5,374.2 449.0,371.8 449.5,370.1 450.0,368.4 450.5,367.5 451.0,364.7 451.5,364.5 452.0,363.4 452.5,362.8 453.0,361.5 453.5,362.5 454.0,363.5 454.5,365.1 455.0,364.6 455.5,365.6 456.0,367.4 456.5,367.3 457.0,367.7 457.5,368.4 458.0,370.0 458.5,370.4 459.0,372.3 459.5,372.8 460.0,373.7 460.5,373.1 461.0,373.5 461.5,374.2 462.0,375.6 462.5,376.7 463.0,376.9 463.5,377.2 464.0,378.2 464.5,379.2 465.0,380.0 465.5,380.8 466.0,381.7 466.5,382.0 467.0,381.7 467.5,383.6 468.0,380.3 468.5,378.3 469.0,375.7 469.5,374.2 470.0,371.2 470.5,369.4 471.0,367.7 471.5,366.1 472.0,366.1 472.5,364.4 473.0,363.1 473.5,362.6 474.0,362.7 474.5,364.6 475.0,365.2 475.5,366.5 476.0,365.7 476.5,367.1 477.0,368.4 477.5,369.2 478.0,370.0 478.5,369.1 479.0,370.3 479.5,370.7 480.0,371.5 480.5,373.5 481.0,373.5 481.5,374.8 482.0,374.4 482.5,376.0 483.0,375.9 483.5,376.2 484.0,377.7 484.5,378.7 485.0,377.8 485.5,379.3 486.0,380.0 486.5,379.9 487.0,380.8 487.5,381.0 488.0,381.7 488.5,381.1 489.0,379.3 489.5,377.1 490.0,374.2 490.5,371.9 491.0,370.6 491.5,369.6 492.0,367.2 492.5,366.0 493.0,364.7 493.5,364.8 494.0,363.6 494.5,363.0 495.0,364.2 495.5,365.2 496.0,365.0 496.5,365.9 497.0,367.5 497.5,367.7 498.0,368.2 498.5,368.9 499.0,370.8 499.5,370.3 500.0,371.4 500.5,371.7 501.0,372.5 501.5,373.9 502.0,374.8 502.5,374.3 503.0,374.6 503.5,376.2 504.0,375.9 504.5,376.2 505.0,378.4 505.5,378.2 506.0,379.5 506.5,379.4 507.0,380.8 507.5,380.7 508.0,380.7 508.5,381.1 509.0,382.6 509.5,380.3 510.0,378.3 510.5,374.4 511.0,373.1 511.5,370.6 512.0,368.9 512.5,366.5 513.0,365.2 513.5,364.3 514.0,363.8 514.5,361.5 515.0,361.5 515.5,361.4 516.0,362.2 516.5,364.5 517.0,365.3 517.5,365.2 518.0,365.2 518.5,367.5 519.0,367.3 519.5,369.0 520.0,369.2 520.5,370.2 521.0,369.7 521.5,371.6 522.0,371.2 522.5,372.2 523.0,373.7 523.5,374.4 524.0,373.9 524.5,374.6 525.0,375.6 525.5,376.5 526.0,376.9 526.5,377.1 527.0,377.9 527.5,379.4 528.0,380.4 528.5,379.5 529.0,381.1 529.5,382.1 530.0,380.0 530.5,379.2 531.0,375.7 531.5,374.5 532.0,372.4 532.5,370.8 533.0,368.6 533.5,367.3 534.0,366.2 534.5,364.8 535.0,364.3 535.5,363.2 536.0,363.2 536.5,364.0 537.0,364.4 537.5,366.2 538.0,367.0 538.5,367.2 539.0,367.5 539.5,368.8 540.0,368.8 540.5,369.6 541.0,370.9 541.5,371.0 542.0,372.3 542.5,373.1 543.0,373.0 543.5,374.8 544.0,374.4 544.5,376.3 545.0,377.1 545.5,377.3 546.0,377.1 546.5,378.6 547.0,379.0 547.5,380.7 548.0,379.9 548.5,381.9 549.0,382.8 549.5,382.9 550.0,383.7 550.5,383.3 551.0,382.2 551.5,378.7 552.0,377.1 552.5,374.8 553.0,371.3 553.5,370.5 554.0,369.0 554.5,365.8 555.0,364.9 555.5,364.5 556.0,362.5 556.5,363.2 557.0,362.2 557.5,363.7 558.0,365.3 558.5,364.8 559.0,365.6 559.5,366.8 560.0,367.2 560.5,367.4 561.0,368.3 561.5,369.0 562.0,371.1 562.5,371.3 563.0,372.3 563.5,371.7 564.0,373.4 564.5,372.9 565.0,374.3 565.5,375.1 566.0,375.3 566.5,376.8 567.0,376.9 567.5,377.6 568.0,378.8 568.5,378.0 569.0,380.2 569.5,380.2 570.0,380.4 570.5,381.7 571.0,381.4 571.5,381.9 572.0,378.7 572.5,375.9 573.0,374.5 573.5,371.9 574.0,369.5 574.5,368.8 575.0,365.9 575.5,365.9 576.0,363.7 576.5,363.4 577.0,363.3 577.5,361.8 578.0,362.3 578.5,363.2 579.0,364.3 579.5,366.0 580.0,366.4 580.5,367.4 581.0,368.9 581.5,368.3 582.0,369.2 582.5,370.7 583.0,370.3 583.5,371.0 584.0,372.4 584.5,372.7 585.0,373.8 585.5,374.3 586.0,375.7 586.5,376.4 587.0,376.4 587.5,377.9 588.0,378.3 588.5,378.4 589.0,380.5 589.5,380.0 590.0,380.5 590.5,381.1 591.0,382.7 591.5,383.8 592.0,384.3 592.5,381.2 593.0,378.4 593.5,375.6 594.0,374.5 594.5,372.3 595.0,370.0 595.5,368.8 596.0,366.8 596.5,366.3 597.0,364.8 597.5,363.1 598.0,363.6 598.5,363.2 599.0,363.8 599.5,364.3 600.0,366.4 600.5,365.8 601.0,367.6 601.5,369.0 602.0,368.3 602.5,369.2 603.0,370.6 603.5,371.2 604.0,372.1 604.5,373.1 605.0,372.7 605.5,373.6 606.0,374.3 606.5,374.5 607.0,376.7 607.5,377.2 608.0,377.8 608.5,377.2 609.0,379.3 609.5,379.8 610.0,380.0 610.5,381.2 611.0,381.3 611.5,381.5 612.0,382.0 612.5,382.9 613.0,381.6 613.5,379.5 614.0,377.7 614.5,375.2 615.0,373.2 615.5,370.9 616.0,368.2 616.5,367.0 617.0,365.2 617.5,364.5 618.0,363.0 618.5,361.7 619.0,361.3 619.5,363.5 620.0,362.9 620.5,364.2 621.0,365.0 621.5,366.7 622.0,367.8 622.5,368.3 623.0,368.3 623.5,370.0 624.0,369.8 624.5,370.4 625.0,372.3 625.5,372.6 626.0,373.4 626.5,374.1 627.0,375.4 627.5,375.2 628.0,376.6 628.5,377.0 629.0,378.0 629.5,377.9 630.0,379.1 630.5,379.6 631.0,379.8 631.5,380.3 632.0,381.7 632.5,381.4 633.0,383.6 633.5,382.9 634.0,380.3 634.5,378.0 635.0,377.1 635.5,373.9 636.0,371.5 636.5,369.4 637.0,367.8 637.5,367.4 638.0,366.0 638.5,365.0 639.0,364.2 639.5,362.4 640.0,364.2 640.5,365.1 641.0,366.1 641.5,365.5 642.0,367.7 642.5,368.6 643.0,369.4 643.5,368.7 644.0,369.6 644.5,370.2 645.0,370.8 645.5,373.0 646.0,373.7 646.5,374.1 647.0,375.1 647.5,375.5 648.0,375.6 648.5,376.0 649.0,376.7 649.5,378.5 650.0,378.2 650.5,379.1 651.0,380.0 651.5,380.0 652.0,381.1 652.5,381.8 653.0,383.3 653.5,383.3 654.0,383.9 654.5,384.2 655.0,380.7 655.5,378.8 656.0,376.0 656.5,372.8 657.0,371.4 657.5,369.6 658.0,368.5 658.5,366.2 659.0,365.6 659.5,364.2 660.0,362.9 660.5,363.6 661.0,363.4 661.5,363.9 662.0,365.1 662.5,366.9 663.0,368.1 663.5,367.1 664.0,368.7 664.5,369.4 665.0,370.7 665.5,370.3 666.0,371.5 666.5,372.0 667.0,373.5 667.5,373.2 668.0,375.1 668.5,374.6 669.0,375.2 669.5,376.7 670.0,377.0 670.5,377.0 671.0,378.6 671.5,378.2 672.0,380.1 672.5,380.6 673.0,381.4 673.5,381.8 674.0,382.0 674.5,382.7 675.0,383.3 675.5,381.8 676.0,378.0 676.5,377.2 677.0,373.6 677.5,371.9 678.0,370.2 678.5,369.7 679.0,367.5 679.5,366.0 680.0,365.8 680.5,363.8 681.0,363.6 681.5,364.6 682.0,365.2 682.5,365.5 683.0,366.2 683.5,366.6 684.0,368.6 684.5,369.0 685.0,369.8 685.5,369.5 686.0,370.6 686.5,371.9 687.0,372.2 687.5,372.1 688.0,373.3 688.5,374.7 689.0,374.2 689.5,374.8 690.0,375.6 690.5,377.0 691.0,377.9 691.5,377.2 692.0,377.9 692.5,378.7 693.0,379.4 693.5,380.4 694.0,380.3 694.5,381.3 695.0,381.6 695.5,383.6 696.0,382.4 696.5,378.8 697.0,378.0 697.5,374.3 698.0,372.7 698.5,371.9 699.0,369.8 699.5,368.1 700.0,366.2 700.5,364.5 701.0,364.3 701.5,362.7 702.0,362.2 702.5,363.9 703.0,365.5 703.5,366.2 704.0,366.6 704.5,367.7 705.0,368.2 705.5,368.4 706.0,370.0 706.5,370.4 707.0,371.7 707.5,372.7 708.0,372.6 708.5,373.6 709.0,374.6 709.5,374.8 710.0,375.1 710.5,376.7 711.0,377.7 711.5,378.2 712.0,378.8 712.5,379.8 713.0,380.1 713.5,380.8 714.0,381.1 714.5,381.5 715.0,382.8 715.5,382.5 716.0,383.7 716.5,385.1 717.0,382.4 717.5,379.6 718.0,376.4 718.5,374.4 719.0,372.3 719.5,370.6 720.0,368.4 720.5,367.2 721.0,366.3 721.5,363.7 722.0,363.6 722.5,363.2 723.0,364.0 723.5,363.3 724.0,365.0 724.5,365.2 725.0,367.1 725.5,368.2 726.0,368.2 726.5,368.2 727.0,369.8 727.5,370.5 728.0,371.6 728.5,371.9 729.0,372.9 729.5,373.9 730.0,374.1 730.5,374.6 731.0,376.3 731.5,375.6 732.0,377.2 732.5,377.4 733.0,378.7 733.5,378.2 734.0,380.5 734.5,380.0 735.0,380.2 735.5,381.2 736.0,382.1 736.5,382.1 737.0,383.5 737.5,382.7 738.0,380.9 738.5,378.0 739.0,375.7 739.5,373.6 740.0,372.7 740.5,371.4 741.0,369.1 741.5,367.2 742.0,367.1 742.5,365.4 743.0,364.4 743.5,365.1 744.0,365.7 744.5,366.3 745.0,367.2 745.5,367.4 746.0,369.4 746.5,369.1 747.0,370.3 747.5,371.3 748.0,372.0 748.5,372.1 749.0,372.4 749.5,373.6 750.0,373.5 750.5,375.4 751.0,375.2 751.5,376.7 752.0,376.3 752.5,377.2 753.0,377.6 753.5,378.6 754.0,378.8 754.5,379.1 755.0,381.0 755.5,380.8 756.0,381.4 756.5,382.1 757.0,383.0 757.5,383.6 758.0,384.6 758.5,382.4 759.0,379.5 759.5,378.4 760.0,376.3 760.5,372.9 761.0,372.6 761.5,371.2 762.0,369.5 762.5,367.1 763.0,367.3 763.5,366.1 764.0,364.5 764.5,366.1 765.0,366.2 765.5,366.7 766.0,367.6 766.5,368.5 767.0,370.2 767.5,370.1 768.0,370.5 768.5,372.5 769.0,373.0 769.5,372.6 770.0,374.6 770.5,374.7 771.0,375.7 771.5,376.2 772.0,377.2 772.5,377.7 773.0,378.4 773.5,377.9 774.0,379.4 774.5,379.8 775.0,380.8 775.5,380.9 776.0,382.3 776.5,382.3 777.0,382.4" fill="none" stroke="#7c4208" stroke-width="1" shape-rendering="crispEdges" stroke-linejoin="round"/>
<polyline points="72.5,237.0 73.0,235.8 73.5,233.8 74.0,232.0 74.5,230.3 75.0,228.9 75.5,227.7 76.0,226.8 76.5,228.8 77.0,232.3 77.5,235.9 78.0,239.4 78.5,243.0 79.0,245.7 79.5,243.7 80.0,241.7 80.5,239.8 81.0,238.0 81.5,236.3 82.0,234.6 82.5,233.1 83.0,231.7 83.5,230.5 84.0,229.4 84.5,228.4 85.0,227.7 85.5,229.0 86.0,232.5 86.5,236.1 87.0,239.6 87.5,243.2 88.0,246.8 88.5,244.8 89.0,242.6 89.5,240.4 90.0,238.4 90.5,236.5 91.0,234.7 91.5,233.0 92.0,231.4 92.5,230.0 93.0,228.7 93.5,227.6 94.0,226.8 94.5,227.1 95.0,230.2 95.5,233.4 96.0,236.6 96.5,239.7 97.0,242.9 97.5,242.2 98.0,240.3 98.5,238.5 99.0,236.8 99.5,235.2 100.0,233.7 100.5,232.2 101.0,230.9 101.5,229.7 102.0,228.6 102.5,227.7 103.0,226.9 103.5,226.6 104.0,229.9 104.5,233.2 105.0,236.5 105.5,239.8 106.0,243.2 106.5,243.5 107.0,241.5 107.5,239.6 108.0,237.8 108.5,236.1 109.0,234.5 109.5,233.0 110.0,231.6 110.5,230.3 111.0,229.1 111.5,228.1 112.0,227.3 112.5,226.7 113.0,229.8 113.5,233.5 114.0,237.2 114.5,240.9 115.0,244.6 115.5,246.1 116.0,243.8 116.5,241.5 117.0,239.4 117.5,237.3 118.0,235.4 118.5,233.5 119.0,231.8 119.5,230.2 120.0,228.8 120.5,227.6 121.0,226.6 121.5,225.9 122.0,228.1 122.5,231.8 123.0,235.5 123.5,239.2 124.0,242.9 124.5,245.6 125.0,243.4 125.5,241.4 126.0,239.4 126.5,237.5 127.0,235.7 127.5,234.0 128.0,232.4 128.5,230.9 129.0,229.6 129.5,228.4 130.0,227.5 130.5,226.7 131.0,227.9 131.5,230.9 132.0,234.0 132.5,237.1 133.0,240.2 133.5,243.3 134.0,241.5 134.5,239.7 135.0,238.0 135.5,236.4 136.0,234.9 136.5,233.4 137.0,232.0 137.5,230.8 138.0,229.6 138.5,228.6 139.0,227.7 139.5,227.1 140.0,227.7 140.5,231.6 141.0,235.4 141.5,239.3 142.0,243.1 142.5,247.0 143.0,246.0 143.5,243.8 144.0,241.6 144.5,239.6 145.0,237.6 145.5,235.8 146.0,234.0 146.5,232.4 147.0,231.0 147.5,229.7 148.0,228.6 148.5,227.7 149.0,227.4 149.5,230.4 150.0,233.5 150.5,236.6 151.0,239.7 151.5,242.8 152.0,242.8 152.5,240.8 153.0,238.8 153.5,237.0 154.0,235.2 154.5,233.5 155.0,232.0 155.5,230.5 156.0,229.2 156.5,228.0 157.0,226.9 157.5,226.1 158.0,225.6 158.5,228.5 159.0,231.9 159.5,235.4 160.0,238.8 160.5,242.3 161.0,243.5 161.5,241.5 162.0,239.6 162.5,237.7 163.0,236.0 163.5,234.3 164.0,232.7 164.5,231.3 165.0,229.9 165.5,228.7 166.0,227.7 166.5,226.8 167.0,226.2 167.5,228.7 168.0,232.5 168.5,236.4 169.0,240.3 169.5,244.2 170.0,246.8 170.5,244.4 171.0,242.1 171.5,239.9 172.0,237.8 172.5,235.8 173.0,233.9 173.5,232.1 174.0,230.5 174.5,229.1 175.0,227.8 175.5,226.7 176.0,225.9 176.5,227.4 177.0,231.0 177.5,234.6 178.0,238.2 178.5,241.8 179.0,245.4 179.5,243.4 180.0,241.5 180.5,239.6 181.0,237.9 181.5,236.2 182.0,234.6 182.5,233.1 183.0,231.8 183.5,230.5 184.0,229.4 184.5,228.5 185.0,227.8 185.5,228.4 186.0,231.7 186.5,235.0 187.0,238.4 187.5,241.7 188.0,245.0 188.5,243.9 189.0,241.9 189.5,240.0 190.0,238.2 190.5,236.5 191.0,234.9 191.5,233.4 192.0,231.9 192.5,230.6 193.0,229.5 193.5,228.5 194.0,227.7 194.5,227.6 195.0,230.8 195.5,234.0 196.0,237.2 196.5,240.4 197.0,243.6 197.5,243.5 198.0,241.4 198.5,239.5 199.0,237.5 199.5,235.7 200.0,234.0 200.5,232.4 201.0,230.9 201.5,229.6 202.0,228.3 202.5,227.3 203.0,226.4 203.5,225.9 204.0,229.0 204.5,232.6 205.0,236.1 205.5,239.7 206.0,243.2 206.5,244.5 207.0,242.6 207.5,240.8 208.0,239.1 208.5,237.4 209.0,235.8 209.5,234.4 210.0,233.0 210.5,231.8 211.0,230.6 211.5,229.7 212.0,228.9 212.5,228.3 213.0,230.7 213.5,234.4 214.0,238.0 214.5,241.7 215.0,245.3 215.5,247.6 216.0,245.4 216.5,243.3 217.0,241.2 217.5,239.3 218.0,237.5 218.5,235.8 219.0,234.2 219.5,232.7 220.0,231.3 220.5,230.2 221.0,229.2 221.5,228.5 222.0,230.0 222.5,233.3 223.0,236.7 223.5,240.1 224.0,243.5 224.5,246.7 225.0,244.5 225.5,242.5 226.0,240.5 226.5,238.6 227.0,236.8 227.5,235.2 228.0,233.6 228.5,232.1 229.0,230.8 229.5,229.6 230.0,228.7 230.5,227.9 231.0,228.8 231.5,232.7 232.0,236.6 232.5,240.5 233.0,244.4 233.5,248.3 234.0,246.9 234.5,244.6 235.0,242.4 235.5,240.3 236.0,238.3 236.5,236.4 237.0,234.6 237.5,232.9 238.0,231.4 238.5,230.1 239.0,229.0 239.5,228.1 240.0,228.0 240.5,231.8 241.0,235.5 241.5,239.3 242.0,243.1 242.5,246.8 243.0,246.5 243.5,244.2 244.0,242.0 244.5,239.8 245.0,237.8 245.5,235.8 246.0,234.0 246.5,232.3 247.0,230.8 247.5,229.4 248.0,228.2 248.5,227.2 249.0,226.6 249.5,230.4 250.0,234.4 250.5,238.5 251.0,242.6 251.5,246.7 252.0,247.7 252.5,245.3 253.0,242.9 253.5,240.6 254.0,238.4 254.5,236.4 255.0,234.5 255.5,232.7 256.0,231.0 256.5,229.5 257.0,228.2 257.5,227.2 258.0,226.5 258.5,229.7 259.0,234.4 259.5,239.0 260.0,243.7 260.5,248.3 261.0,251.1 261.5,248.4 262.0,245.8 262.5,243.4 263.0,241.0 263.5,238.8 264.0,236.7 264.5,234.8 265.0,233.0 265.5,231.4 266.0,230.0 266.5,228.8 267.0,227.9 267.5,229.8 268.0,233.9 268.5,237.9 269.0,241.9 269.5,246.0 270.0,249.6 270.5,247.0 271.0,244.5 271.5,242.2 272.0,239.9 272.5,237.7 273.0,235.7 273.5,233.8 274.0,232.1 274.5,230.5 275.0,229.1 275.5,227.9 276.0,227.0 276.5,228.1 277.0,232.5 277.5,236.9 278.0,241.3 278.5,245.6 279.0,250.0 279.5,248.3 280.0,245.7 280.5,243.3 281.0,241.0 281.5,238.8 282.0,236.7 282.5,234.7 283.0,232.9 283.5,231.3 284.0,229.8 284.5,228.5 285.0,227.6 285.5,227.7 286.0,232.4 286.5,237.0 287.0,241.6 287.5,246.3 288.0,250.9 288.5,250.5 289.0,247.7 289.5,245.1 290.0,242.6 290.5,240.2 291.0,238.0 291.5,235.8 292.0,233.9 292.5,232.1 293.0,230.5 293.5,229.1 294.0,228.0 294.5,227.3 295.0,231.1 295.5,235.2 296.0,239.2 296.5,243.2 297.0,247.2 297.5,248.1 298.0,245.6 298.5,243.3 299.0,241.0 299.5,238.8 300.0,236.8 300.5,234.9 301.0,233.1 301.5,231.5 302.0,230.0 302.5,228.7 303.0,227.7 303.5,227.0 304.0,230.0 304.5,234.2 305.0,238.4 305.5,242.6 306.0,246.8 306.5,249.0 307.0,246.6 307.5,244.3 308.0,242.1 308.5,240.0 309.0,238.0 309.5,236.1 310.0,234.3 310.5,232.7 311.0,231.3 311.5,230.0 312.0,228.9 312.5,228.2 313.0,230.7 313.5,235.5 314.0,240.2 314.5,245.0 315.0,249.8 315.5,253.8 316.0,250.9 316.5,248.1 317.0,245.4 317.5,242.9 318.0,240.5 318.5,238.2 319.0,236.0 319.5,234.1 320.0,232.3 320.5,230.7 321.0,229.4 321.5,228.4 322.0,229.8 322.5,234.6 323.0,239.4 323.5,244.2 324.0,249.0 324.5,253.8 325.0,251.7 325.5,249.0 326.0,246.4 326.5,243.9 327.0,241.5 327.5,239.3 328.0,237.2 328.5,235.3 329.0,233.5 329.5,231.9 330.0,230.6 330.5,229.6 331.0,229.8 331.5,234.0 332.0,238.2 332.5,242.4 333.0,246.6 333.5,250.8 334.0,250.1 334.5,247.6 335.0,245.1 335.5,242.7 336.0,240.5 336.5,238.4 337.0,236.4 337.5,234.5 338.0,232.8 338.5,231.3 339.0,230.0 339.5,229.0 340.0,228.4 340.5,232.7 341.0,237.0 341.5,241.4 342.0,245.8 342.5,250.2 343.0,250.9 343.5,248.4 344.0,245.9 344.5,243.5 345.0,241.2 345.5,239.1 346.0,237.1 346.5,235.2 347.0,233.5 347.5,232.0 348.0,230.6 348.5,229.5 349.0,228.8 349.5,232.6 350.0,237.5 350.5,242.5 351.0,247.4 351.5,252.3 352.0,254.7 352.5,251.7 353.0,248.8 353.5,246.0 354.0,243.4 354.5,240.9 355.0,238.5 355.5,236.3 356.0,234.3 356.5,232.5 357.0,230.9 357.5,229.6 358.0,228.7 358.5,231.6 359.0,236.8 359.5,242.1 360.0,247.4 360.5,252.6 361.0,256.8 361.5,253.7 362.0,250.6 362.5,247.7 363.0,245.0 363.5,242.3 364.0,239.9 364.5,237.6 365.0,235.4 365.5,233.5 366.0,231.8 366.5,230.4 367.0,229.3 367.5,230.7 368.0,235.2 368.5,239.7 369.0,244.2 369.5,248.8 370.0,253.3 370.5,250.9 371.0,248.2 371.5,245.7 372.0,243.2 372.5,240.8 373.0,238.6 373.5,236.5 374.0,234.6 374.5,232.9 375.0,231.3 375.5,230.0 376.0,229.0 376.5,229.6 377.0,234.9 377.5,240.2 378.0,245.4 378.5,250.7 379.0,256.0 379.5,255.0 380.0,251.8 380.5,248.7 381.0,245.8 381.5,243.1 382.0,240.4 382.5,238.0 383.0,235.7 383.5,233.6 384.0,231.8 384.5,230.2 385.0,228.9 385.5,228.2 386.0,233.5 386.5,238.8 387.0,244.1 387.5,249.4 388.0,254.7 388.5,255.5 389.0,252.5 389.5,249.6 390.0,246.9 390.5,244.3 391.0,241.8 391.5,239.5 392.0,237.4 392.5,235.4 393.0,233.6 393.5,232.1 394.0,230.9 394.5,230.0 395.0,233.8 395.5,238.5 396.0,243.3 396.5,248.0 397.0,252.7 397.5,254.8 398.0,251.9 398.5,249.2 399.0,246.6 399.5,244.1 400.0,241.7 400.5,239.5 401.0,237.4 401.5,235.5 402.0,233.8 402.5,232.3 403.0,231.1 403.5,230.2 404.0,232.9 404.5,237.4 405.0,242.0 405.5,246.6 406.0,251.1 406.5,254.5 407.0,251.7 407.5,249.0 408.0,246.4 408.5,244.0 409.0,241.6 409.5,239.4 410.0,237.4 410.5,235.5 411.0,233.8 411.5,232.2 412.0,231.0 412.5,230.0 413.0,231.6 413.5,235.9 414.0,240.3 414.5,244.6 415.0,248.9 415.5,253.3 416.0,250.9 416.5,248.3 417.0,245.8 417.5,243.4 418.0,241.2 418.5,239.1 419.0,237.1 419.5,235.3 420.0,233.6 420.5,232.1 421.0,230.9 421.5,229.9 422.0,230.5 422.5,234.8 423.0,239.2 423.5,243.5 424.0,247.8 424.5,252.2 425.0,251.1 425.5,248.4 426.0,245.8 426.5,243.4 427.0,241.0 427.5,238.8 428.0,236.8 428.5,234.9 429.0,233.1 429.5,231.6 430.0,230.2 430.5,229.2 431.0,228.8 431.5,234.1 432.0,239.5 432.5,244.9 433.0,250.2 433.5,255.6 434.0,256.0 434.5,252.7 435.0,249.6 435.5,246.7 436.0,243.9 436.5,241.2 437.0,238.7 437.5,236.4 438.0,234.2 438.5,232.3 439.0,230.7 439.5,229.3 440.0,228.5 440.5,232.4 441.0,237.2 441.5,241.9 442.0,246.6 442.5,251.4 443.0,253.2 443.5,250.4 444.0,247.6 444.5,245.0 445.0,242.6 445.5,240.2 446.0,238.0 446.5,235.9 447.0,234.0 447.5,232.3 448.0,230.8 448.5,229.6 449.0,228.7 449.5,231.9 450.0,237.1 450.5,242.2 451.0,247.4 451.5,252.5 452.0,256.1 452.5,252.9 453.0,249.9 453.5,246.9 454.0,244.2 454.5,241.5 455.0,239.0 455.5,236.7 456.0,234.5 456.5,232.6 457.0,230.9 457.5,229.5 458.0,228.4 458.5,230.3 459.0,235.1 459.5,240.0 460.0,244.8 460.5,249.7 461.0,254.5 461.5,251.8 462.0,249.1 462.5,246.6 463.0,244.1 463.5,241.8 464.0,239.6 464.5,237.6 465.0,235.7 465.5,234.0 466.0,232.5 466.5,231.2 467.0,230.2 467.5,231.1 468.0,236.2 468.5,241.2 469.0,246.3 469.5,251.4 470.0,256.4 470.5,254.9 471.0,251.8 471.5,248.8 472.0,246.0 472.5,243.3 473.0,240.8 473.5,238.4 474.0,236.2 474.5,234.2 475.0,232.4 475.5,230.8 476.0,229.6 476.5,229.3 477.0,234.3 477.5,239.3 478.0,244.4 478.5,249.4 479.0,254.4 479.5,254.6 480.0,251.7 480.5,248.9 481.0,246.3 481.5,243.8 482.0,241.4 482.5,239.2 483.0,237.1 483.5,235.2 484.0,233.5 484.5,232.0 485.0,230.9 485.5,230.1 486.0,234.0 486.5,238.6 487.0,243.1 487.5,247.7 488.0,252.3 488.5,253.7 489.0,250.9 489.5,248.1 490.0,245.5 490.5,243.0 491.0,240.6 491.5,238.4 492.0,236.3 492.5,234.4 493.0,232.7 493.5,231.2 494.0,230.0 494.5,229.1 495.0,232.1 495.5,236.8 496.0,241.5 496.5,246.1 497.0,250.8 497.5,253.8 498.0,251.2 498.5,248.6 499.0,246.1 499.5,243.8 500.0,241.6 500.5,239.5 501.0,237.5 501.5,235.7 502.0,234.1 502.5,232.7 503.0,231.5 503.5,230.6 504.0,232.8 504.5,237.7 505.0,242.6 505.5,247.5 506.0,252.4 506.5,257.1 507.0,254.1 507.5,251.2 508.0,248.4 508.5,245.8 509.0,243.2 509.5,240.8 510.0,238.6 510.5,236.6 511.0,234.7 511.5,233.0 512.0,231.6 512.5,230.6 513.0,231.4 513.5,235.8 514.0,240.2 514.5,244.5 515.0,248.9 515.5,253.3 516.0,251.6 516.5,248.8 517.0,246.1 517.5,243.6 518.0,241.1 518.5,238.8 519.0,236.6 519.5,234.6 520.0,232.8 520.5,231.2 521.0,229.8 521.5,228.7 522.0,228.6 522.5,233.5 523.0,238.4 523.5,243.3 524.0,248.2 524.5,253.1 525.0,253.0 525.5,250.1 526.0,247.4 526.5,244.8 527.0,242.3 527.5,239.9 528.0,237.7 528.5,235.6 529.0,233.8 529.5,232.1 530.0,230.6 530.5,229.5 531.0,228.7 531.5,233.3 532.0,238.4 532.5,243.5 533.0,248.6 533.5,253.7 534.0,255.3 534.5,252.4 535.0,249.6 535.5,247.0 536.0,244.5 536.5,242.1 537.0,239.8 537.5,237.7 538.0,235.8 538.5,234.1 539.0,232.6 539.5,231.4 540.0,230.5 540.5,234.0 541.0,239.1 541.5,244.2 542.0,249.2 542.5,254.3 543.0,257.3 543.5,254.1 544.0,251.1 544.5,248.1 545.0,245.4 545.5,242.7 546.0,240.2 546.5,237.9 547.0,235.7 547.5,233.8 548.0,232.1 548.5,230.7 549.0,229.6 549.5,232.0 550.0,237.0 550.5,242.0 551.0,247.1 551.5,252.1 552.0,257.0 552.5,254.0 553.0,251.2 553.5,248.5 554.0,245.9 554.5,243.5 555.0,241.2 555.5,239.0 556.0,237.0 556.5,235.2 557.0,233.5 557.5,232.2 558.0,231.1 558.5,231.6 559.0,236.1 559.5,240.6 560.0,245.1 560.5,249.6 561.0,254.2 561.5,253.3 562.0,250.5 562.5,247.8 563.0,245.2 563.5,242.7 564.0,240.4 564.5,238.2 565.0,236.2 565.5,234.3 566.0,232.7 566.5,231.2 567.0,230.1 567.5,229.4 568.0,234.3 568.5,239.6 569.0,245.0 569.5,250.3 570.0,255.7 570.5,257.3 571.0,254.0 571.5,250.9 572.0,247.8 572.5,245.0 573.0,242.2 573.5,239.7 574.0,237.3 574.5,235.1 575.0,233.1 575.5,231.3 576.0,229.9 576.5,228.9 577.0,231.8 577.5,236.6 578.0,241.5 578.5,246.3 579.0,251.2 579.5,255.0 580.0,252.2 580.5,249.5 581.0,246.9 581.5,244.5 582.0,242.2 582.5,240.0 583.0,237.9 583.5,236.0 584.0,234.3 584.5,232.8 585.0,231.5 585.5,230.5 586.0,231.7 586.5,236.1 587.0,240.6 587.5,245.0 588.0,249.4 588.5,253.9 589.0,252.3 589.5,249.7 590.0,247.3 590.5,244.9 591.0,242.7 591.5,240.6 592.0,238.6 592.5,236.7 593.0,235.0 593.5,233.5 594.0,232.3 594.5,231.3 595.0,230.9 595.5,235.5 596.0,240.1 596.5,244.7 597.0,249.3 597.5,253.9 598.0,254.3 598.5,251.5 599.0,248.7 599.5,246.1 600.0,243.6 600.5,241.2 601.0,238.9 601.5,236.9 602.0,234.9 602.5,233.2 603.0,231.7 603.5,230.5 604.0,229.7 604.5,233.3 605.0,238.3 605.5,243.3 606.0,248.3 606.5,253.3 607.0,256.2 607.5,253.1 608.0,250.2 608.5,247.4 609.0,244.7 609.5,242.2 610.0,239.8 610.5,237.5 611.0,235.5 611.5,233.6 612.0,232.0 612.5,230.6 613.0,229.6 613.5,231.5 614.0,236.2 614.5,240.9 615.0,245.6 615.5,250.4 616.0,255.1 616.5,252.5 617.0,249.8 617.5,247.2 618.0,244.8 618.5,242.4 619.0,240.2 619.5,238.1 620.0,236.2 620.5,234.4 621.0,232.9 621.5,231.5 622.0,230.5 622.5,230.8 623.0,235.5 623.5,240.3 624.0,245.0 624.5,249.7 625.0,254.4 625.5,254.1 626.0,251.5 626.5,249.0 627.0,246.6 627.5,244.3 628.0,242.1 628.5,240.0 629.0,238.1 629.5,236.4 630.0,234.8 630.5,233.5 631.0,232.4 631.5,231.7 632.0,235.7 632.5,240.4 633.0,245.0 633.5,249.6 634.0,254.2 634.5,256.0 635.0,253.1 635.5,250.4 636.0,247.8 636.5,245.4 637.0,243.0 637.5,240.8 638.0,238.7 638.5,236.8 639.0,235.1 639.5,233.6 640.0,232.4 640.5,231.5 641.0,234.2 641.5,239.1 642.0,244.0 642.5,248.9 643.0,253.8 643.5,258.0 644.0,254.8 644.5,251.8 645.0,248.9 645.5,246.1 646.0,243.5 646.5,241.0 647.0,238.7 647.5,236.6 648.0,234.6 648.5,232.9 649.0,231.5 649.5,230.4 650.0,231.3 650.5,235.9 651.0,240.4 651.5,245.0 652.0,249.6 652.5,254.2 653.0,252.9 653.5,250.3 654.0,247.7 654.5,245.2 655.0,242.9 655.5,240.7 656.0,238.6 656.5,236.7 657.0,235.0 657.5,233.4 658.0,232.1 658.5,231.0 659.0,230.4 659.5,234.5 660.0,238.6 660.5,242.8 661.0,246.9 661.5,251.1 662.0,251.8 662.5,249.3 663.0,246.9 663.5,244.6 664.0,242.5 664.5,240.4 665.0,238.5 665.5,236.7 666.0,235.0 666.5,233.5 667.0,232.2 667.5,231.1 668.0,230.4 668.5,233.2 669.0,237.3 669.5,241.5 670.0,245.6 670.5,249.7 671.0,252.4 671.5,249.9 672.0,247.6 672.5,245.3 673.0,243.1 673.5,241.0 674.0,239.1 674.5,237.3 675.0,235.6 675.5,234.1 676.0,232.7 676.5,231.6 677.0,230.8 677.5,232.2 678.0,236.4 678.5,240.6 679.0,244.8 679.5,249.0 680.0,253.2 680.5,251.3 681.0,249.1 681.5,246.9 682.0,244.9 682.5,242.9 683.0,241.1 683.5,239.4 684.0,237.8 684.5,236.3 685.0,235.0 685.5,233.9 686.0,233.0 686.5,233.0 687.0,236.5 687.5,240.1 688.0,243.6 688.5,247.1 689.0,250.7 689.5,250.5 690.0,248.3 690.5,246.1 691.0,244.1 691.5,242.1 692.0,240.3 692.5,238.5 693.0,236.9 693.5,235.5 694.0,234.1 694.5,233.0 695.0,232.1 695.5,231.5 696.0,234.6 696.5,238.3 697.0,242.1 697.5,245.9 698.0,249.7 698.5,251.5 699.0,249.3 699.5,247.3 700.0,245.3 700.5,243.4 701.0,241.6 701.5,239.9 702.0,238.3 702.5,236.9 703.0,235.6 703.5,234.4 704.0,233.5 704.5,232.8 705.0,234.5 705.5,238.0 706.0,241.5 706.5,245.0 707.0,248.5 707.5,251.7 708.0,249.5 708.5,247.5 709.0,245.5 709.5,243.7 710.0,241.9 710.5,240.2 711.0,238.7 711.5,237.2 712.0,235.9 712.5,234.7 713.0,233.7 713.5,233.0 714.0,233.4 714.5,236.5 715.0,239.6 715.5,242.7 716.0,245.8 716.5,248.9 717.0,248.2 717.5,246.3 718.0,244.5 718.5,242.8 719.0,241.1 719.5,239.6 720.0,238.1 720.5,236.8 721.0,235.6 721.5,234.4 722.0,233.5 722.5,232.7 723.0,232.3 723.5,235.2 724.0,238.3 724.5,241.4 725.0,244.5 725.5,247.5 726.0,248.4 726.5,246.7 727.0,245.1 727.5,243.5 728.0,242.0 728.5,240.6 729.0,239.3 729.5,238.0 730.0,236.9 730.5,235.9 731.0,235.0 731.5,234.3 732.0,233.7 732.5,235.5 733.0,238.4 733.5,241.2 734.0,244.0 734.5,246.9 735.0,248.9 735.5,247.0 736.0,245.2 736.5,243.5 737.0,241.8 737.5,240.3 738.0,238.8 738.5,237.4 739.0,236.2 739.5,235.0 740.0,234.0 740.5,233.2 741.0,232.5 741.5,233.7 742.0,237.6 742.5,241.6 743.0,245.5 743.5,249.4 744.0,253.3 744.5,251.8 745.0,249.6 745.5,247.5 746.0,245.5 746.5,243.7 747.0,241.9 747.5,240.2 748.0,238.6 748.5,237.2 749.0,236.0 749.5,234.9 750.0,234.1 750.5,233.9 751.0,237.4 751.5,240.9 752.0,244.4 752.5,247.9 753.0,251.3 753.5,251.4 754.0,249.2 754.5,247.1 755.0,245.1 755.5,243.1 756.0,241.3 756.5,239.6 757.0,238.0 757.5,236.5 758.0,235.2 758.5,234.0 759.0,233.1 759.5,232.5 760.0,235.5 760.5,239.5 761.0,243.5 761.5,247.4 762.0,251.4 762.5,253.5 763.0,251.2 763.5,249.0 764.0,246.8 764.5,244.8 765.0,242.9 765.5,241.1 766.0,239.4 766.5,237.8 767.0,236.4 767.5,235.2 768.0,234.2 768.5,233.4 769.0,234.7 769.5,237.7 770.0,240.6 770.5,243.6 771.0,246.6 771.5,249.5 772.0,247.7 772.5,245.9 773.0,244.2 773.5,242.5 774.0,241.0 774.5,239.5 775.0,238.1 775.5,236.8 776.0,235.7 776.5,234.7 777.0,233.8" fill="none" stroke="#00707a" stroke-width="1" shape-rendering="crispEdges" stroke-linejoin="round"/>
</svg>
<div class="a r1" style="left:8px;top:664px;width:1008px;height:40px"></div>
<div class="a rb" style="left:16px;top:672px;width:81px;height:25px"></div>
<div class="t" id="alarm" style="left:22.66px;top:676px;font-size:17px;color:#000;transform:scaleX(0.5176)">アラームリセット</div>
<div class="a sb" style="left:104px;top:672px;width:902px;height:25px;background:#fff"></div>
<div class="a rb" style="left:989px;top:674px;width:16px;height:22px"><svg width="14" height="19" viewBox="0 0 14 19" shape-rendering="crispEdges" style="left:0;top:0"><path d="M3 8h7v1h-1v1h-1v1h-1v1h-1v-1h-1v-1h-1v-1h-1z" fill="#000"/></svg></div>
<div class="a s1" style="left:0;top:719px;width:150px;height:19px"></div>
<div class="a s1" style="left:152px;top:719px;width:872px;height:19px"></div>
<div class="t" id="stat" style="left:1.21px;top:722px;font-size:13px;color:#000;transform:scaleX(0.7938)">保存ウェイト！！</div>
<div class="a" style="left:0;top:738px;width:1024px;height:1px;background:#d4d0c8"></div>
<div class="a" style="left:0;top:739px;width:1024px;height:1px;background:#fff"></div>
<div class="a rb" style="left:2px;top:742px;width:63px;height:22px"></div>
<svg class="a" style="left:5px;top:745px" width="16" height="16" viewBox="0 0 16 16">
<path d="M1.5 2.5C3.5 1.3 5.5 1.3 7.3 2.4L6.3 7.2C4.6 6.2 2.6 6.2 0.6 7.4Z" fill="#e8502a"/>
<path d="M8.3 2.9C10 3.9 12 3.9 14.2 2.8L13.2 7.6C11 8.7 9 8.7 7.3 7.7Z" fill="#7ac043"/>
<path d="M0.4 8.4C2.4 7.2 4.4 7.2 6.1 8.2L5.1 13C3.4 12 1.4 12 -0.6 13.2Z" fill="#3b7ad8"/>
<path d="M7.1 8.7C8.8 9.7 10.8 9.7 13 8.6L12 13.4C9.8 14.5 7.8 14.5 6.1 13.5Z" fill="#f7c331"/>
</svg>
<div class="t" id="start" style="left:20.71px;top:746px;font-size:13px;font-weight:bold;font-family:'Liberation Sans','Noto Sans CJK JP',sans-serif;color:#000;transform:scaleX(0.7857)">スタート</div>
<div class="a" style="left:71px;top:744px;width:3px;height:19px;border-left:2px solid #fff;border-right:1px solid #808080"></div>
<div class="a" style="left:153px;top:744px;width:3px;height:19px;border-left:2px solid #fff;border-right:1px solid #808080"></div>
<svg class="a" style="left:80px;top:745px" width="18" height="18" viewBox="0 0 18 18">
<ellipse cx="9" cy="9.5" rx="8.6" ry="3.6" transform="rotate(-32 9 9.5)" fill="none" stroke="#86c4f2" stroke-width="1.3"/>
<path d="M13.2 12.6A5 5 0 1 1 13.9 9.4H5.2" fill="none" stroke="#1e7fdc" stroke-width="2.8"/>
</svg>
<svg class="a" style="left:103px;top:745px" width="18" height="18" viewBox="0 0 18 18">
<path d="M1.5 4.5C1.5 3.5 2 3 3 3H6.5L8 4.5H14C15 4.5 15.5 5 15.5 6V14C15.5 14.6 15 15 14.5 15H2.5C2 15 1.5 14.6 1.5 14Z" fill="#f2d37a" stroke="#b8862a" stroke-width="1"/>
<path d="M4 7.5H17L14.5 15H1.8Z" fill="#fbe9a8" stroke="#b8862a" stroke-width="1"/>
<circle cx="8" cy="8.5" r="3.2" fill="#dbeaf8" stroke="#8aa0b8" stroke-width="1"/>
</svg>
<svg class="a" style="left:126px;top:745px" width="18" height="18" viewBox="0 0 18 18">
<path d="M2 4L13 1.5L16 3V13L5 16.5L2 14.5Z" fill="#2a7ad8" stroke="#78b4ee" stroke-width="1"/>
<rect x="5.5" y="5" width="7" height="7.5" fill="#fff" stroke="#9cc" stroke-width="0.6" transform="rotate(-8 9 9)"/>
<path d="M7 11L11 6" stroke="#2a7ad8" stroke-width="1.4"/>
<circle cx="15.5" cy="5" r="1" fill="#e84a2a"/>
</svg>
<div class="a pb dith" style="left:160px;top:742px;width:160px;height:22px"></div>
<svg class="a" style="left:165px;top:746px" width="16" height="16" viewBox="0 0 16 16" shape-rendering="crispEdges">
<rect x="0" y="0" width="16" height="16" fill="#222"/>
<rect x="1" y="1" width="14" height="6" fill="#fff"/>
<rect x="2" y="2" width="8" height="1" fill="#b8a8e0"/><rect x="9" y="1" width="4" height="1" fill="#9a80d0"/><rect x="12" y="2" width="2" height="2" fill="#502060"/>
<rect x="2" y="4" width="6" height="1" fill="#8070c8"/><rect x="7" y="3" width="5" height="1" fill="#e08080"/>
<rect x="2" y="5" width="11" height="1" fill="#d8c890"/>
<rect x="1" y="6" width="14" height="2" fill="#70b060"/>
<rect x="1" y="8" width="14" height="1" fill="#d8d8d8"/>
<rect x="1" y="9" width="14" height="1" fill="#444"/>
<rect x="2" y="10" width="13" height="5" fill="#fff"/>
<rect x="3" y="11" width="3" height="4" fill="#c01818"/>
<rect x="7" y="11" width="3" height="4" fill="#1020b0"/>
<rect x="11" y="10" width="3" height="5" fill="#20d030"/>
</svg>
<div class="t" id="task1" style="left:183.21px;top:747px;font-size:13px;font-weight:bold;font-family:'Liberation Sans','Noto Sans CJK JP',sans-serif;color:#000;transform:scaleX(0.7895)">ソフトサーモ</div>
<div class="t" id="task2" style="left:253.55px;top:747px;font-size:13px;font-weight:bold;font-family:'Liberation Sans','Noto Sans CJK JP',sans-serif;color:#000;transform:scaleX(0.9483)">E830</div>
<div class="a" style="left:849px;top:744px;width:3px;height:19px;border-left:2px solid #fff;border-right:1px solid #808080"></div>
<svg class="a" style="left:858px;top:746px" width="15" height="16" viewBox="0 0 15 16" shape-rendering="crispEdges">
<path d="M3 1h1v1h1v1h1v-1h1v1h1v-1h1v1h1v1h-7z" fill="#404040"/>
<rect x="1.5" y="5.5" width="12" height="9" fill="#fff" stroke="#202020"/>
<path d="M3 7h1v1h-1zM5 7h1v1h-1zM7 7h1v1h-1zM9 7h1v1h-1zM11 7h1v1h-1zM3 9h1v1h-1zM5 9h1v1h-1zM7 9h1v1h-1zM9 9h1v1h-1zM11 9h1v1h-1zM3 11h1v1h-1zM5 11h5v1h-5zM11 11h1v1h-1z" fill="#202020"/>
</svg>
<div class="a s1" style="left:875px;top:742px;width:147px;height:23px"></div>
<div class="t" id="chev" style="left:878.58px;top:746px;font-size:13px;font-weight:bold;font-family:'Liberation Sans','Noto Sans CJK JP',sans-serif;color:#000;transform:scaleX(1.4167)">«</div>
<svg class="a" style="left:893px;top:745px" width="16" height="17" viewBox="0 0 16 17">
<path d="M8 1C10 2.2 12.5 2.8 14.5 2.8V8C14.5 11.5 11.5 14.5 8 16C4.5 14.5 1.5 11.5 1.5 8V2.8C3.5 2.8 6 2.2 8 1Z" fill="#f3cf2c" stroke="#8a7a3a" stroke-width="1"/>
<path d="M8 4.5v5.5" stroke="#222" stroke-width="2"/><circle cx="8" cy="12.3" r="1.1" fill="#222"/>
</svg>
<svg class="a" style="left:911px;top:745px" width="16" height="17" viewBox="0 0 16 17">
<path d="M8 1C10 2.2 12.5 2.8 14.5 2.8V8C14.5 11.5 11.5 14.5 8 16C4.5 14.5 1.5 11.5 1.5 8V2.8C3.5 2.8 6 2.2 8 1Z" fill="#d8283a" stroke="#8a6a72" stroke-width="1"/>
<path d="M5.5 6l5 5M10.5 6l-5 5" stroke="#fff" stroke-width="1.8"/>
</svg>
<svg class="a" style="left:928px;top:744px" width="18" height="19" viewBox="0 0 18 19">
<path d="M9 1.5C13.3 1.5 16.3 4.2 16.3 7.6C16.3 10.6 14 12.9 10.6 13.5L8.2 17.6V13.7C4.5 13.3 1.7 10.8 1.7 7.6C1.7 4.2 4.7 1.5 9 1.5Z" fill="#e4eefa" stroke="#9ab4d8" stroke-width="1"/>
<text x="9" y="12" text-anchor="middle" font-family='"Liberation Serif",serif' font-weight="bold" font-size="13" fill="#1c4fb0">i</text>
</svg>
<svg class="a" style="left:947px;top:746px" width="16" height="16" viewBox="0 0 16 16" shape-rendering="crispEdges">
<rect x="0" y="0" width="16" height="16" fill="#0000c8"/><rect x="1" y="1" width="14" height="14" fill="#0808e0"/>
<path d="M4 3L12.5 8L4 13Z" fill="#fff" shape-rendering="auto"/>
</svg>
<svg class="a" style="left:966px;top:746px" width="15" height="15" viewBox="0 0 15 15">
<path d="M6.5 1.5L8.1 5.4L12.2 5.7L9.1 8.4L10.1 12.5L6.5 10.3L2.9 12.5L3.9 8.4L0.8 5.7L4.9 5.4Z" fill="#f5d83c" stroke="#a08a3a" stroke-width="0.8" stroke-dasharray="1.2 0.8"/>
<path d="M12.5 10v3.5M9.5 13.5h1.5" stroke="#444" stroke-width="1"/>
</svg>
<div class="t" id="clock" style="left:989.37px;top:748px;font-size:12px;color:#000;transform:scaleX(0.9318)">2:59</div>
</body></html>
